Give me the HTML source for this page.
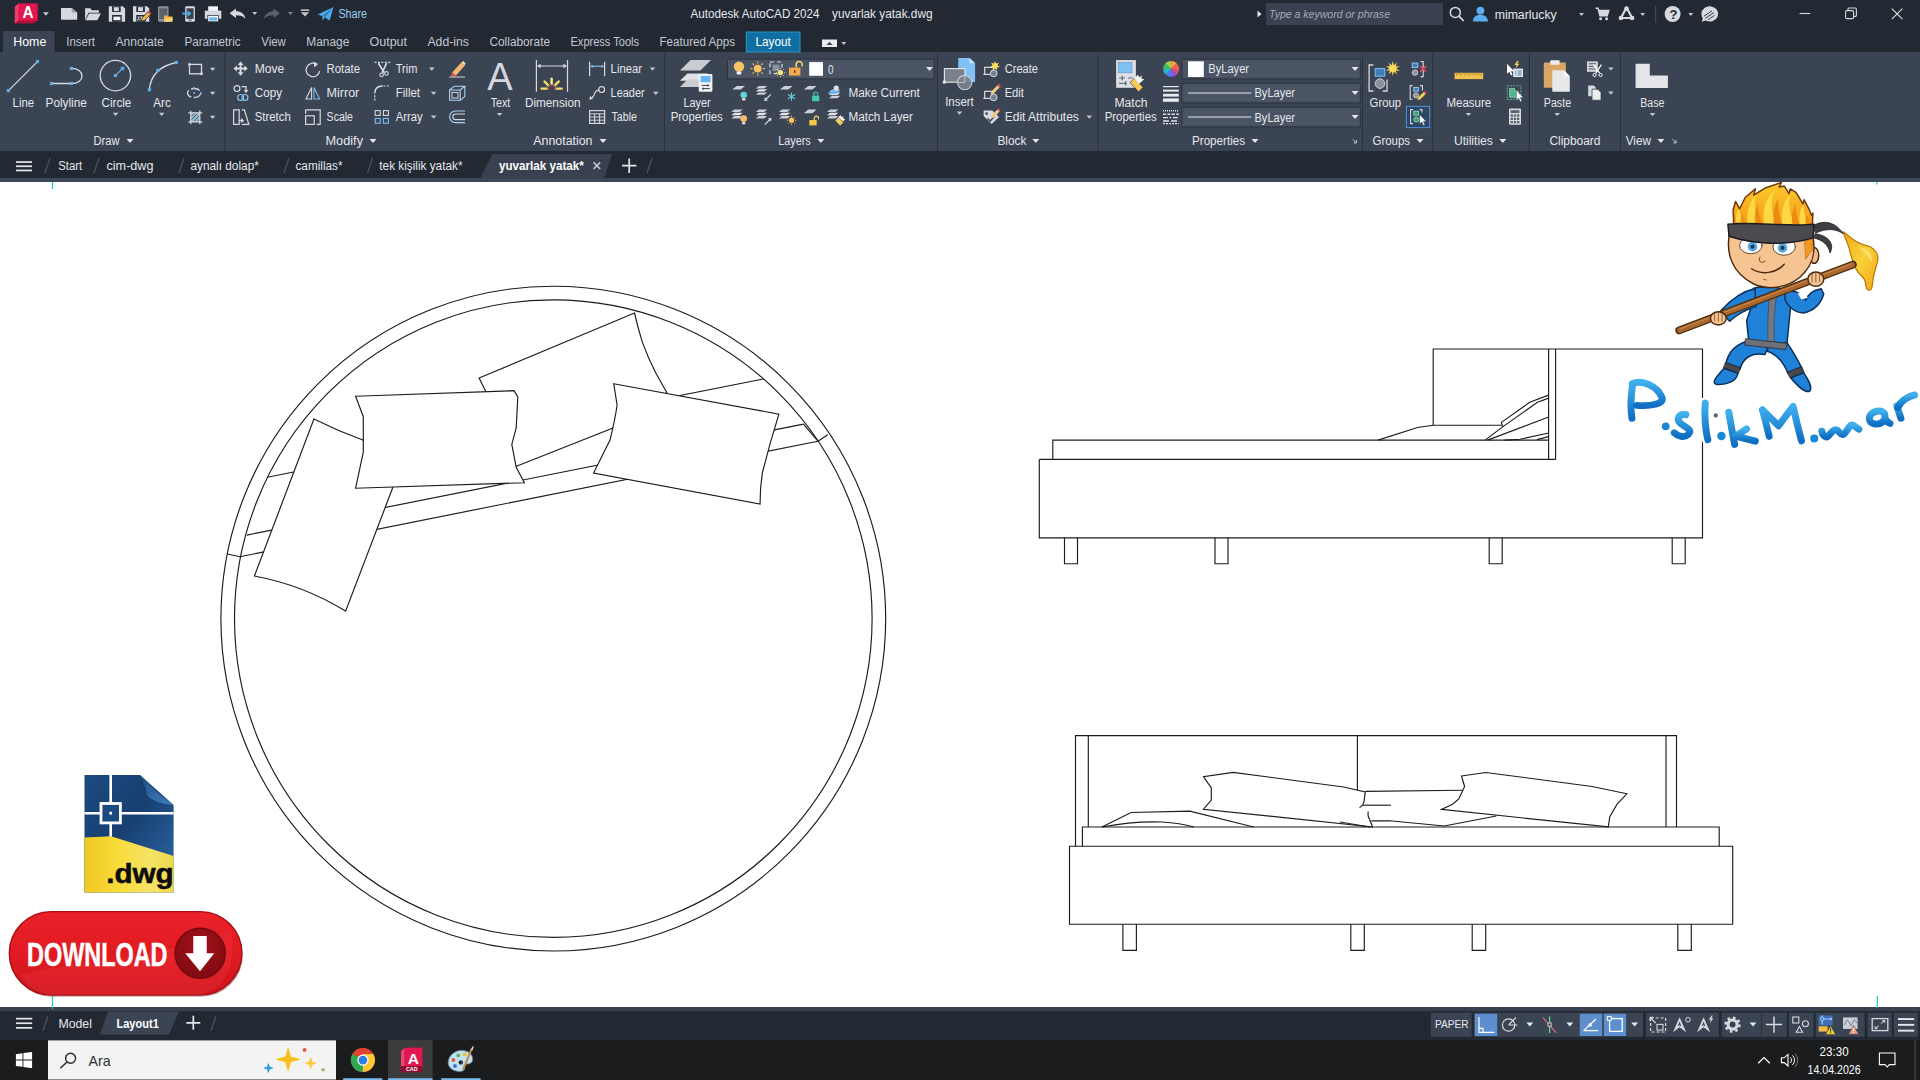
<!DOCTYPE html>
<html lang="en"><head><meta charset="utf-8"><title>Autodesk AutoCAD 2024 - yuvarlak yatak.dwg</title>
<style>
html,body{margin:0;padding:0;background:#fff;overflow:hidden;}
body{width:1920px;height:1080px;position:relative;font-family:"Liberation Sans",sans-serif;}
#titlebar{position:absolute;left:0;top:0;width:1920px;height:52px;background:#222933;}
#ribbon{position:absolute;left:0;top:52px;width:1920px;height:99.2px;background:#3b4453;}
#filetabs{position:absolute;left:0;top:151.2px;width:1920px;height:26.8px;background:#222933;}
#stripe1{position:absolute;left:0;top:178px;width:1920px;height:4px;background:#3d4655;}
#canvas{position:absolute;left:0;top:182px;width:1920px;height:825px;background:#ffffff;}
#stripe2{position:absolute;left:0;top:1007px;width:1920px;height:4px;background:#39414e;}
#statusbar{position:absolute;left:0;top:1011px;width:1920px;height:29px;background:#222933;}
#taskbar{position:absolute;left:0;top:1040px;width:1920px;height:40px;background:#1b1c1e;}
svg{position:absolute;left:0;top:0;}
text{white-space:pre;}
</style></head>
<body>
<div id="titlebar"></div>
<div id="ribbon"></div>
<div id="filetabs"></div>
<div id="stripe1"></div>
<div id="canvas"></div>
<div id="stripe2"></div>
<div id="statusbar"></div>
<div id="taskbar"></div>
<svg id="drawing" width="1920" height="1080" viewBox="0 0 1920 1080">
<line x1="52.5" y1="182" x2="52.5" y2="189" stroke="#19c8c8" stroke-width="1.2"/>
<line x1="1876.8" y1="182" x2="1876.8" y2="184.5" stroke="#19c8c8" stroke-width="1.2"/>
<line x1="52.5" y1="996" x2="52.5" y2="1009" stroke="#19c8c8" stroke-width="1.2"/>
<line x1="1877.3" y1="996" x2="1877.3" y2="1008" stroke="#19c8c8" stroke-width="1.2"/>
<circle cx="553.3" cy="618.6" r="332.4" fill="none" stroke="#1c1c1c" stroke-width="1.15"/>
<circle cx="553.3" cy="618.6" r="318.8" fill="none" stroke="#1c1c1c" stroke-width="1.15"/>
<line x1="267.3" y1="477.3" x2="763.3" y2="379.0" stroke="#1c1c1c" stroke-width="1.15"/>
<line x1="246.7" y1="535.1" x2="803.4" y2="424.1" stroke="#1c1c1c" stroke-width="1.15"/>
<line x1="240.0" y1="556.7" x2="818.0" y2="441.2" stroke="#1c1c1c" stroke-width="1.15"/>
<line x1="227.3" y1="554.0" x2="240.0" y2="556.7" stroke="#1c1c1c" stroke-width="1.15"/>
<line x1="803.4" y1="424.1" x2="818.0" y2="441.2" stroke="#1c1c1c" stroke-width="1.15"/>
<line x1="818.0" y1="441.2" x2="827.8" y2="434.8" stroke="#1c1c1c" stroke-width="1.15"/>
<path d="M479.1 378 L634.5 313 Q638 328 642 341.1 Q648 358 655.8 373 L666.9 392.8 L611.1 428.8 L514.5 467 L500 420 Z" fill="#fff" stroke="#1c1c1c" stroke-width="1.15"/>
<path d="M314 418.9 Q338 431 362.9 440 L392.7 487.8 L345.6 611.1 Q303 585 254.4 576 Z" fill="#fff" stroke="#1c1c1c" stroke-width="1.15"/>
<path d="M355.6 396.2 L514 390.7 L517.8 396.7 L516.2 427.8 L511.8 444.4 L516.2 467.3 L524.4 482.7 L355.6 488.2 L363.3 452.2 L363.3 416.7 Z" fill="#fff" stroke="#1c1c1c" stroke-width="1.15"/>
<path d="M613.7 383.7 L778.9 414.1 Q769.7 443.3 762.3 473.1 Q760 488 760.1 504 L593.6 473.1 L610 440.1 Q615 420 617.1 405 Z" fill="#fff" stroke="#1c1c1c" stroke-width="1.15"/>
<path d="M1039.3 459.4 L1039.3 537.8 L1702.5 537.8 L1702.5 349.0 L1433.2 349.0 L1433.2 425.2" fill="none" stroke="#1c1c1c" stroke-width="1.15" stroke-linejoin="miter"/>
<line x1="1039.3" y1="459.4" x2="1555.6" y2="459.4" stroke="#1c1c1c" stroke-width="1.15"/>
<line x1="1548.6" y1="349.0" x2="1548.6" y2="459.4" stroke="#1c1c1c" stroke-width="1.15"/>
<line x1="1555.6" y1="349.0" x2="1555.6" y2="459.4" stroke="#1c1c1c" stroke-width="1.15"/>
<path d="M1052.8 459.4 L1052.8 440.1 L1548.6 440.1" fill="none" stroke="#1c1c1c" stroke-width="1.15" stroke-linejoin="miter"/>
<path d="M1378.0 440.1 L1417.5 427.5 L1433.2 425.2 L1501.4 425.2" fill="none" stroke="#1c1c1c" stroke-width="1.15" stroke-linejoin="miter"/>
<path d="M1485.2 440.1 L1502.6 426.9 L1501.4 422.4 L1529.7 402.3 L1548.6 395.1" fill="none" stroke="#1c1c1c" stroke-width="1.15" stroke-linejoin="miter"/>
<path d="M1502.6 426.9 L1537.5 402.3 L1548.6 398.1" fill="none" stroke="#1c1c1c" stroke-width="1.15" stroke-linejoin="miter"/>
<line x1="1487.6" y1="440.1" x2="1548.6" y2="417.0" stroke="#1c1c1c" stroke-width="1.15"/>
<path d="M1504.4 440.1 L1520.1 439.3 L1548.6 433.0" fill="none" stroke="#1c1c1c" stroke-width="1.15" stroke-linejoin="miter"/>
<line x1="1536.9" y1="439.6" x2="1548.6" y2="436.6" stroke="#1c1c1c" stroke-width="1.15"/>
<path d="M1064.5 537.8 L1064.5 563.7 L1077.5 563.7 L1077.5 537.8" fill="none" stroke="#1c1c1c" stroke-width="1.15" stroke-linejoin="miter"/>
<path d="M1215.0 537.8 L1215.0 563.7 L1228.0 563.7 L1228.0 537.8" fill="none" stroke="#1c1c1c" stroke-width="1.15" stroke-linejoin="miter"/>
<path d="M1489.2 537.8 L1489.2 563.7 L1502.2 563.7 L1502.2 537.8" fill="none" stroke="#1c1c1c" stroke-width="1.15" stroke-linejoin="miter"/>
<path d="M1672.2 537.8 L1672.2 563.7 L1685.2 563.7 L1685.2 537.8" fill="none" stroke="#1c1c1c" stroke-width="1.15" stroke-linejoin="miter"/>
<path d="M1069.5 846.2 L1732.7 846.2 L1732.7 924.2 L1069.5 924.2 Z" fill="none" stroke="#1c1c1c" stroke-width="1.15" stroke-linejoin="miter"/>
<path d="M1082.4 846.2 L1082.4 827.0 L1719.2 827.0 L1719.2 846.2" fill="none" stroke="#1c1c1c" stroke-width="1.15" stroke-linejoin="miter"/>
<path d="M1075.5 846.2 L1075.5 735.6 L1676.5 735.6 L1676.5 827.0" fill="none" stroke="#1c1c1c" stroke-width="1.15" stroke-linejoin="miter"/>
<line x1="1088.3" y1="735.6" x2="1088.3" y2="827.0" stroke="#1c1c1c" stroke-width="1.15"/>
<line x1="1666.0" y1="735.6" x2="1666.0" y2="827.0" stroke="#1c1c1c" stroke-width="1.15"/>
<line x1="1357.4" y1="735.6" x2="1357.4" y2="790.3" stroke="#1c1c1c" stroke-width="1.15"/>
<path d="M1101.9 827.0 L1131.1 812.5 L1189.8 811.2 L1253.6 827.0" fill="none" stroke="#1c1c1c" stroke-width="1.15" stroke-linejoin="miter"/>
<path d="M1101.9 827 Q1133 821 1162 822 Q1180 823 1194 827" fill="none" stroke="#1c1c1c" stroke-width="1.15"/>
<path d="M1372.6 827.0 L1203.5 809.2 L1211.3 800.1 L1211.3 787.9 L1203.5 776.6 L1233.2 772.4 L1343.5 787.0 L1365.3 791.9 L1364.0 801.6 L1362.6 805.2 L1359.5 807.6" fill="none" stroke="#1c1c1c" stroke-width="1.15" stroke-linejoin="miter"/>
<line x1="1362.6" y1="805.2" x2="1390.9" y2="805.2" stroke="#1c1c1c" stroke-width="1.15"/>
<path d="M1368.1 811.6 L1368.1 815.8 L1372.6 827.0" fill="none" stroke="#1c1c1c" stroke-width="1.15" stroke-linejoin="miter"/>
<line x1="1340.0" y1="822.0" x2="1370.0" y2="827.0" stroke="#1c1c1c" stroke-width="1.15"/>
<line x1="1365.3" y1="791.4" x2="1462.9" y2="790.2" stroke="#1c1c1c" stroke-width="1.15"/>
<path d="M1371.3 820.8 L1389.6 820.8 L1444.2 826.0 L1496.3 816.0" fill="none" stroke="#1c1c1c" stroke-width="1.15" stroke-linejoin="miter"/>
<path d="M1461.5 776.0 L1485.8 772.5 L1592.1 786.5 L1626.9 793.8 L1617.1 804.2 L1609.8 816.7 L1608.3 826.9 L1441.5 809.4 L1452.5 804.2 L1458.8 799.0 L1464.6 786.5 Z" fill="none" stroke="#1c1c1c" stroke-width="1.15" stroke-linejoin="miter"/>
<path d="M1122.9 924.2 L1122.9 950.4 L1136.4 950.4 L1136.4 924.2" fill="none" stroke="#1c1c1c" stroke-width="1.15" stroke-linejoin="miter"/>
<path d="M1350.8 924.2 L1350.8 950.4 L1364.3 950.4 L1364.3 924.2" fill="none" stroke="#1c1c1c" stroke-width="1.15" stroke-linejoin="miter"/>
<path d="M1472.2 924.2 L1472.2 950.4 L1485.7 950.4 L1485.7 924.2" fill="none" stroke="#1c1c1c" stroke-width="1.15" stroke-linejoin="miter"/>
<path d="M1677.8 924.2 L1677.8 950.4 L1691.3 950.4 L1691.3 924.2" fill="none" stroke="#1c1c1c" stroke-width="1.15" stroke-linejoin="miter"/>
<defs>
<linearGradient id="dwgB" x1="0" y1="0" x2="1" y2="1"><stop offset="0" stop-color="#1d4a80"/><stop offset=".45" stop-color="#173f70"/><stop offset="1" stop-color="#2f6cab"/></linearGradient>
<linearGradient id="dwgY" x1="0" y1="0" x2="1" y2="0"><stop offset="0" stop-color="#f1c823"/><stop offset=".4" stop-color="#f8dc3c"/><stop offset=".75" stop-color="#f6e267"/><stop offset="1" stop-color="#f0d84a"/></linearGradient>
<linearGradient id="dwgF" x1="0" y1="0" x2="1" y2="1"><stop offset="0" stop-color="#1f4f86"/><stop offset="1" stop-color="#3f7fbe"/></linearGradient>
<linearGradient id="dlR" x1="0" y1="0" x2="0" y2="1"><stop offset="0" stop-color="#ea2129"/><stop offset=".55" stop-color="#e01a22"/><stop offset="1" stop-color="#c9151c"/></linearGradient>
<radialGradient id="dlC" cx=".5" cy=".35" r=".7"><stop offset="0" stop-color="#a5121a"/><stop offset="1" stop-color="#7c0a10"/></radialGradient>
<linearGradient id="pmT" x1="0" y1="0" x2="0" y2="1"><stop offset="0" stop-color="#3fb0ee"/><stop offset="1" stop-color="#0f6ec2"/></linearGradient>
<linearGradient id="hairG" x1="0" y1="0" x2="0" y2="1"><stop offset="0" stop-color="#fdc92e"/><stop offset="1" stop-color="#f59a14"/></linearGradient>
<linearGradient id="mopG" x1="0" y1="0" x2="1" y2="1"><stop offset="0" stop-color="#f2a916"/><stop offset=".5" stop-color="#fbd03a"/><stop offset="1" stop-color="#f0a814"/></linearGradient>
</defs>
<path d="M84.5 775H140L173.6 805V892.4H84.5z" fill="url(#dwgB)"/>
<path d="M84.5 837.5L111 836.2L173.6 856V892.4H84.5z" fill="url(#dwgY)"/>
<path d="M140 775C150 786 160 796 173.6 805C160 804 150 800 147 795C146 788 144 781 140 775z" fill="url(#dwgF)"/>
<path d="M110.7 775V836.4M84.5 813.2H173.6" stroke="#ffffff" stroke-width="2.6"/>
<rect x="101" y="803.5" width="19.4" height="19.4" fill="#1c4a80" stroke="#ffffff" stroke-width="2.8"/><rect x="109.3" y="811.8" width="2.8" height="2.8" fill="#ffffff"/>
<text x="106.2" y="882.7" font-family="Liberation Sans, sans-serif" font-weight="bold" font-size="27" fill="#0c0c0c" stroke="#0c0c0c" stroke-width=".5" textLength="67.5" lengthAdjust="spacingAndGlyphs">.dwg</text>
<rect x="10.3" y="913.4" width="232.6" height="83.4" rx="41.7" fill="#5a0d10" opacity=".35"/>
<rect x="9.3" y="911.6" width="232.6" height="83.4" rx="41.7" fill="url(#dlR)" stroke="#a80f15" stroke-width="1.4"/>
<path d="M20 975C70 960 150 962 232 930V953.300A41.700 41.700 0 0 1 200.200 995H51A41.700 41.700 0 0 1 20 975z" fill="#f0343b" opacity=".35"/>
<circle cx="200.2" cy="953.3" r="25.2" fill="url(#dlC)" stroke="#6d080d" stroke-width="1.2"/>
<path d="M193.3 935.9H206.7V953.3H214.3L200 971.3L185.2 953.3H193.3z" fill="#ffffff"/>
<text x="27" y="966.3" font-family="Liberation Sans, sans-serif" font-weight="bold" font-size="33.5" fill="#ffffff" stroke="#ffffff" stroke-width=".5" textLength="140.5" lengthAdjust="spacingAndGlyphs">DOWNLOAD</text>
<g transform="translate(1670 175) scale(0.20833)" stroke-linejoin="round" stroke-linecap="round">
<path d="M832 272C860 292 882 322 930 335C985 345 1006 382 995 422C986 452 976 472 972 522C970 562 945 562 940 530C940 500 925 490 905 470C880 440 870 392 860 352C850 320 838 300 832 272z" fill="url(#mopG)" stroke="#b87a0c" stroke-width="6"/>
<path d="M905 345C950 355 975 380 968 420C960 400 935 375 905 345z" fill="#fde27a" opacity=".8"/>
<path d="M686 246C722 218 786 214 832 282C792 256 750 256 700 278z" fill="#3f3f43" stroke="#1c1c1e" stroke-width="4"/>
<path d="M698 282C760 290 792 332 768 374C760 332 730 312 692 302z" fill="#3f3f43" stroke="#1c1c1e" stroke-width="4"/>
<path d="M380 796L470 828L456 862C400 850 352 872 336 932L268 906C280 850 310 812 380 796z" fill="#1f82d8" stroke="#0b2f58" stroke-width="7"/>
<path d="M468 830L560 802C592 850 616 890 632 926L566 952C546 900 512 862 468 846z" fill="#1f82d8" stroke="#0b2f58" stroke-width="7"/>
<path d="M268 900L338 925L328 952L258 926z" fill="#47484e" stroke="#1c1c1e" stroke-width="4"/>
<path d="M564 946L632 920L644 948L578 974z" fill="#47484e" stroke="#1c1c1e" stroke-width="4"/>
<path d="M260 928L326 952C320 986 282 1006 226 1006C198 1000 214 976 260 928z" fill="#1f82d8" stroke="#0b2f58" stroke-width="7"/>
<path d="M580 974L642 950C666 986 686 1020 670 1038C650 1046 610 1010 580 974z" fill="#1f82d8" stroke="#0b2f58" stroke-width="7"/>
<path d="M400 545C440 528 540 538 562 560L578 640L562 806L378 800L368 700L394 620z" fill="#1f82d8" stroke="#0b2f58" stroke-width="7"/>
<path d="M480 560C470 640 468 720 470 800L500 800C496 720 500 640 515 565z" fill="#767880" stroke="#3a3b40" stroke-width="3"/>
<path d="M364 786L562 808L556 838L360 816z" fill="#6e7078" stroke="#2c2d31" stroke-width="4"/>
<path d="M552 560C600 548 640 570 652 602C662 572 690 552 726 546L738 572C722 622 690 652 640 662C600 662 568 632 552 600z" fill="#1f82d8" stroke="#0b2f58" stroke-width="7"/>
<path d="M612 566L650 552L660 590L630 596z" fill="#ffffff"/>
<path d="M408 545C340 560 280 612 244 652L286 702C330 662 380 642 412 632z" fill="#1f82d8" stroke="#0b2f58" stroke-width="7"/>
<path d="M44 746L878 430" stroke="#4a2a0c" stroke-width="37"/><path d="M46 745L876 431" stroke="#a9672f" stroke-width="25"/><path d="M50 738L872 426" stroke="#c98a4a" stroke-width="5"/>
<ellipse cx="232" cy="688" rx="38" ry="32" fill="#f6c392" stroke="#4a2a0c" stroke-width="7"/><path d="M214 662V700M232 660V702M250 664V700" stroke="#4a2a0c" stroke-width="3"/>
<ellipse cx="700" cy="500" rx="38" ry="34" fill="#f6c392" stroke="#4a2a0c" stroke-width="7"/><path d="M682 474V512M700 470V514M718 474V510" stroke="#4a2a0c" stroke-width="3"/>
<ellipse cx="692" cy="386" rx="22" ry="38" fill="#f3b884" stroke="#4a2a0c" stroke-width="7"/>
<path d="M285 286C268 380 300 470 400 522C470 556 560 542 622 492C682 440 702 380 686 296C560 340 400 330 285 286z" fill="#f6c392" stroke="#4a2a0c" stroke-width="7"/>
<path d="M648 320L684 304L682 362L652 402z" fill="#f49a1c" stroke="#a85a0c" stroke-width="3"/>
<ellipse cx="388" cy="338" rx="54" ry="40" fill="#ffffff" stroke="#4a2a0c" stroke-width="4"/><ellipse cx="548" cy="345" rx="54" ry="40" fill="#ffffff" stroke="#4a2a0c" stroke-width="4"/>
<circle cx="396" cy="344" r="23" fill="#5ba8de"/><circle cx="396" cy="344" r="10" fill="#173a5c"/><circle cx="540" cy="350" r="23" fill="#5ba8de"/><circle cx="540" cy="350" r="10" fill="#173a5c"/>
<path d="M432 394C420 416 440 426 456 414" fill="none" stroke="#4a2a0c" stroke-width="4"/><path d="M392 450C440 482 510 472 548 428" fill="none" stroke="#4a2a0c" stroke-width="7"/><path d="M448 500l14 4" stroke="#4a2a0c" stroke-width="3"/>
<path d="M306 240L303 167L315 127L334 162L361 108L410 66L402 97L460 61L535 36L524 58L549 53L571 89L577 67L605 83L638 139L644 119L666 161L680 194L686 183L683 246C560 262 420 250 306 240z" fill="url(#hairG)" stroke="#6a3808" stroke-width="7"/>
<path d="M318 225C316 190 322 160 334 170C340 200 350 220 362 236zM372 232C366 180 380 140 410 95C400 150 410 200 430 240zM452 240C440 180 455 120 500 72C480 130 490 190 512 244zM540 246C530 190 540 130 575 95C566 150 580 200 600 246zM622 244C616 200 624 165 642 140C640 180 650 215 668 240z" fill="#ffe04a" opacity=".85"/>
<path d="M340 238C336 215 340 196 348 186C350 205 356 222 366 238zM410 242C402 205 408 170 424 140C422 180 430 212 446 244zM500 246C490 200 498 150 520 110C516 160 524 205 540 246zM588 246C580 205 588 170 604 140C602 180 610 214 626 246zM652 242C648 222 652 204 660 192C662 212 668 228 678 240z" fill="#e8820f" opacity=".8"/>
<path d="M278 236C400 222 560 250 692 236L686 302C560 342 400 332 283 294z" fill="#4b4b4f" stroke="#1c1c1e" stroke-width="7"/>
</g>
<g transform="translate(1610 365) scale(0.16146)" fill="none" stroke-linecap="round" stroke-linejoin="round">
<path d="M140 122C128 200 128 280 136 330" stroke="#ffffff" stroke-width="74"/>
<path d="M138 116C200 88 292 130 322 200C340 242 250 256 166 250" stroke="#ffffff" stroke-width="74"/>
<path d="M470 308C430 298 404 334 440 364C482 396 512 402 482 432C460 452 420 442 398 420" stroke="#ffffff" stroke-width="74"/>
<path d="M590 236C584 300 590 400 606 462" stroke="#ffffff" stroke-width="74"/>
<path d="M736 292C746 352 760 430 772 492" stroke="#ffffff" stroke-width="74"/>
<path d="M846 396L778 440L900 472" stroke="#ffffff" stroke-width="74"/>
<path d="M944 278C960 332 976 400 986 442" stroke="#ffffff" stroke-width="74"/>
<path d="M946 280L1044 376L1134 256C1150 330 1170 410 1186 470" stroke="#ffffff" stroke-width="74"/>
<path d="M1312 410C1318 440 1340 456 1356 436C1372 416 1388 396 1404 402C1420 410 1428 436 1444 430C1462 424 1476 380 1494 372C1512 366 1526 392 1542 398" stroke="#ffffff" stroke-width="74"/>
<path d="M1700 300C1670 270 1610 290 1606 330C1604 372 1670 380 1700 340C1706 320 1704 310 1700 300C1700 330 1712 352 1734 362" stroke="#ffffff" stroke-width="74"/>
<path d="M1776 252L1802 330" stroke="#ffffff" stroke-width="74"/>
<path d="M1782 264C1800 222 1850 192 1886 186" stroke="#ffffff" stroke-width="74"/>
<circle cx="345" cy="380" r="40" fill="#ffffff"/>
<circle cx="690" cy="440" r="42" fill="#ffffff"/>
<circle cx="1265" cy="455" r="41" fill="#ffffff"/>
<path d="M140 122C128 200 128 280 136 330" stroke="url(#pmT)" stroke-width="43"/>
<path d="M138 116C200 88 292 130 322 200C340 242 250 256 166 250" stroke="url(#pmT)" stroke-width="43"/>
<path d="M470 308C430 298 404 334 440 364C482 396 512 402 482 432C460 452 420 442 398 420" stroke="url(#pmT)" stroke-width="43"/>
<path d="M590 236C584 300 590 400 606 462" stroke="url(#pmT)" stroke-width="43"/>
<path d="M736 292C746 352 760 430 772 492" stroke="url(#pmT)" stroke-width="43"/>
<path d="M846 396L778 440L900 472" stroke="url(#pmT)" stroke-width="43"/>
<path d="M944 278C960 332 976 400 986 442" stroke="url(#pmT)" stroke-width="43"/>
<path d="M946 280L1044 376L1134 256C1150 330 1170 410 1186 470" stroke="url(#pmT)" stroke-width="43"/>
<path d="M1312 410C1318 440 1340 456 1356 436C1372 416 1388 396 1404 402C1420 410 1428 436 1444 430C1462 424 1476 380 1494 372C1512 366 1526 392 1542 398" stroke="url(#pmT)" stroke-width="43"/>
<path d="M1700 300C1670 270 1610 290 1606 330C1604 372 1670 380 1700 340C1706 320 1704 310 1700 300C1700 330 1712 352 1734 362" stroke="url(#pmT)" stroke-width="43"/>
<path d="M1776 252L1802 330" stroke="url(#pmT)" stroke-width="43"/>
<path d="M1782 264C1800 222 1850 192 1886 186" stroke="url(#pmT)" stroke-width="43"/>
<circle cx="345" cy="380" r="24" fill="#1a86d6"/>
<circle cx="690" cy="440" r="26" fill="#1a86d6"/>
<circle cx="1265" cy="455" r="25" fill="#1a86d6"/>
<circle cx="655" cy="312" r="13" fill="#5f6368"/>
</g>
</svg>
<svg id="ui" width="1920" height="1080" viewBox="0 0 1920 1080">
<rect x="3.0" y="31.0" width="51.5" height="21.0" fill="#3b4453" />
<rect x="746.3" y="32.0" width="53.7" height="20.0" fill="#0f6fa3" stroke="#2f95cc" stroke-width="1"/>
<rect x="224.5" y="54.0" width="1.4" height="97.0" fill="#2a313c" />
<rect x="225.9" y="54.0" width="0.8" height="97.0" fill="#444d5d" />
<rect x="664.0" y="54.0" width="1.4" height="97.0" fill="#2a313c" />
<rect x="665.4" y="54.0" width="0.8" height="97.0" fill="#444d5d" />
<rect x="937.0" y="54.0" width="1.4" height="97.0" fill="#2a313c" />
<rect x="938.4" y="54.0" width="0.8" height="97.0" fill="#444d5d" />
<rect x="1097.8" y="54.0" width="1.4" height="97.0" fill="#2a313c" />
<rect x="1099.2" y="54.0" width="0.8" height="97.0" fill="#444d5d" />
<rect x="1362.1" y="54.0" width="1.4" height="97.0" fill="#2a313c" />
<rect x="1363.5" y="54.0" width="0.8" height="97.0" fill="#444d5d" />
<rect x="1432.2" y="54.0" width="1.4" height="97.0" fill="#2a313c" />
<rect x="1433.6" y="54.0" width="0.8" height="97.0" fill="#444d5d" />
<rect x="1528.8" y="54.0" width="1.4" height="97.0" fill="#2a313c" />
<rect x="1530.2" y="54.0" width="0.8" height="97.0" fill="#444d5d" />
<rect x="1620.0" y="54.0" width="1.4" height="97.0" fill="#2a313c" />
<rect x="1621.4" y="54.0" width="0.8" height="97.0" fill="#444d5d" />
<rect x="1266.0" y="3.0" width="177.0" height="22.0" fill="#3a4251" />
<text x="338.4" y="18.0" font-family="Liberation Sans, sans-serif" font-size="12.5" fill="#9ccdf1" font-weight="normal" font-style="normal" textLength="28.7" lengthAdjust="spacingAndGlyphs">Share</text>
<text x="690.5" y="18.3" font-family="Liberation Sans, sans-serif" font-size="12" fill="#e4e7ec" font-weight="normal" font-style="normal" textLength="129.0" lengthAdjust="spacingAndGlyphs">Autodesk AutoCAD 2024</text>
<text x="832.0" y="18.3" font-family="Liberation Sans, sans-serif" font-size="12" fill="#e4e7ec" font-weight="normal" font-style="normal" textLength="100.5" lengthAdjust="spacingAndGlyphs">yuvarlak yatak.dwg</text>
<text x="1269.0" y="18.0" font-family="Liberation Sans, sans-serif" font-size="11" fill="#a4aab4" font-weight="normal" font-style="italic" textLength="121.0" lengthAdjust="spacingAndGlyphs">Type a keyword or phrase</text>
<text x="1494.7" y="19.0" font-family="Liberation Sans, sans-serif" font-size="12.5" fill="#e4e7ec" font-weight="normal" font-style="normal" textLength="62.0" lengthAdjust="spacingAndGlyphs">mimarlucky</text>
<text x="13.3" y="46.2" font-family="Liberation Sans, sans-serif" font-size="12" fill="#ffffff" font-weight="normal" font-style="normal" textLength="33.0" lengthAdjust="spacingAndGlyphs">Home</text>
<text x="66.3" y="46.2" font-family="Liberation Sans, sans-serif" font-size="12" fill="#c3c8d0" font-weight="normal" font-style="normal" textLength="28.7" lengthAdjust="spacingAndGlyphs">Insert</text>
<text x="115.5" y="46.2" font-family="Liberation Sans, sans-serif" font-size="12" fill="#c3c8d0" font-weight="normal" font-style="normal" textLength="48.3" lengthAdjust="spacingAndGlyphs">Annotate</text>
<text x="184.5" y="46.2" font-family="Liberation Sans, sans-serif" font-size="12" fill="#c3c8d0" font-weight="normal" font-style="normal" textLength="56.0" lengthAdjust="spacingAndGlyphs">Parametric</text>
<text x="261.3" y="46.2" font-family="Liberation Sans, sans-serif" font-size="12" fill="#c3c8d0" font-weight="normal" font-style="normal" textLength="24.5" lengthAdjust="spacingAndGlyphs">View</text>
<text x="306.3" y="46.2" font-family="Liberation Sans, sans-serif" font-size="12" fill="#c3c8d0" font-weight="normal" font-style="normal" textLength="43.0" lengthAdjust="spacingAndGlyphs">Manage</text>
<text x="369.5" y="46.2" font-family="Liberation Sans, sans-serif" font-size="12" fill="#c3c8d0" font-weight="normal" font-style="normal" textLength="37.5" lengthAdjust="spacingAndGlyphs">Output</text>
<text x="427.5" y="46.2" font-family="Liberation Sans, sans-serif" font-size="12" fill="#c3c8d0" font-weight="normal" font-style="normal" textLength="41.3" lengthAdjust="spacingAndGlyphs">Add-ins</text>
<text x="489.5" y="46.2" font-family="Liberation Sans, sans-serif" font-size="12" fill="#c3c8d0" font-weight="normal" font-style="normal" textLength="60.5" lengthAdjust="spacingAndGlyphs">Collaborate</text>
<text x="570.5" y="46.2" font-family="Liberation Sans, sans-serif" font-size="12" fill="#c3c8d0" font-weight="normal" font-style="normal" textLength="68.5" lengthAdjust="spacingAndGlyphs">Express Tools</text>
<text x="659.5" y="46.2" font-family="Liberation Sans, sans-serif" font-size="12" fill="#c3c8d0" font-weight="normal" font-style="normal" textLength="75.5" lengthAdjust="spacingAndGlyphs">Featured Apps</text>
<text x="755.5" y="46.2" font-family="Liberation Sans, sans-serif" font-size="12" fill="#ffffff" font-weight="normal" font-style="normal" textLength="35.3" lengthAdjust="spacingAndGlyphs">Layout</text>
<rect x="822.0" y="39.5" width="15.0" height="7.5" fill="#e9ebee" />
<path d="M826.5 45l3-3.2 3 3.2z" fill="#39414e"/>
<path d="M841.3 42.0h5l-2.5 3z" fill="#c3c8d0"/>
<text x="12.6" y="106.6" font-family="Liberation Sans, sans-serif" font-size="12" fill="#e4e7ec" font-weight="normal" font-style="normal" textLength="21.5" lengthAdjust="spacingAndGlyphs">Line</text>
<text x="45.5" y="106.6" font-family="Liberation Sans, sans-serif" font-size="12" fill="#e4e7ec" font-weight="normal" font-style="normal" textLength="41.4" lengthAdjust="spacingAndGlyphs">Polyline</text>
<text x="101.6" y="106.6" font-family="Liberation Sans, sans-serif" font-size="12" fill="#e4e7ec" font-weight="normal" font-style="normal" textLength="29.6" lengthAdjust="spacingAndGlyphs">Circle</text>
<text x="153.3" y="106.6" font-family="Liberation Sans, sans-serif" font-size="12" fill="#e4e7ec" font-weight="normal" font-style="normal" textLength="17.4" lengthAdjust="spacingAndGlyphs">Arc</text>
<text x="254.7" y="72.9" font-family="Liberation Sans, sans-serif" font-size="12" fill="#e4e7ec" font-weight="normal" font-style="normal" textLength="29.5" lengthAdjust="spacingAndGlyphs">Move</text>
<text x="254.7" y="96.9" font-family="Liberation Sans, sans-serif" font-size="12" fill="#e4e7ec" font-weight="normal" font-style="normal" textLength="27.3" lengthAdjust="spacingAndGlyphs">Copy</text>
<text x="254.7" y="120.9" font-family="Liberation Sans, sans-serif" font-size="12" fill="#e4e7ec" font-weight="normal" font-style="normal" textLength="36.1" lengthAdjust="spacingAndGlyphs">Stretch</text>
<text x="326.6" y="72.9" font-family="Liberation Sans, sans-serif" font-size="12" fill="#e4e7ec" font-weight="normal" font-style="normal" textLength="33.4" lengthAdjust="spacingAndGlyphs">Rotate</text>
<text x="326.6" y="96.9" font-family="Liberation Sans, sans-serif" font-size="12" fill="#e4e7ec" font-weight="normal" font-style="normal" textLength="32.7" lengthAdjust="spacingAndGlyphs">Mirror</text>
<text x="326.6" y="120.9" font-family="Liberation Sans, sans-serif" font-size="12" fill="#e4e7ec" font-weight="normal" font-style="normal" textLength="26.4" lengthAdjust="spacingAndGlyphs">Scale</text>
<text x="395.8" y="72.9" font-family="Liberation Sans, sans-serif" font-size="12" fill="#e4e7ec" font-weight="normal" font-style="normal" textLength="21.6" lengthAdjust="spacingAndGlyphs">Trim</text>
<text x="395.8" y="96.9" font-family="Liberation Sans, sans-serif" font-size="12" fill="#e4e7ec" font-weight="normal" font-style="normal" textLength="24.2" lengthAdjust="spacingAndGlyphs">Fillet</text>
<text x="395.8" y="120.9" font-family="Liberation Sans, sans-serif" font-size="12" fill="#e4e7ec" font-weight="normal" font-style="normal" textLength="26.7" lengthAdjust="spacingAndGlyphs">Array</text>
<text x="490.7" y="106.6" font-family="Liberation Sans, sans-serif" font-size="12" fill="#e4e7ec" font-weight="normal" font-style="normal" textLength="19.5" lengthAdjust="spacingAndGlyphs">Text</text>
<text x="524.9" y="106.6" font-family="Liberation Sans, sans-serif" font-size="12" fill="#e4e7ec" font-weight="normal" font-style="normal" textLength="55.6" lengthAdjust="spacingAndGlyphs">Dimension</text>
<text x="610.6" y="72.9" font-family="Liberation Sans, sans-serif" font-size="12" fill="#e4e7ec" font-weight="normal" font-style="normal" textLength="31.5" lengthAdjust="spacingAndGlyphs">Linear</text>
<text x="610.6" y="96.9" font-family="Liberation Sans, sans-serif" font-size="12" fill="#e4e7ec" font-weight="normal" font-style="normal" textLength="34.1" lengthAdjust="spacingAndGlyphs">Leader</text>
<text x="611.5" y="120.9" font-family="Liberation Sans, sans-serif" font-size="12" fill="#e4e7ec" font-weight="normal" font-style="normal" textLength="25.4" lengthAdjust="spacingAndGlyphs">Table</text>
<text x="683.4" y="106.6" font-family="Liberation Sans, sans-serif" font-size="12" fill="#e4e7ec" font-weight="normal" font-style="normal" textLength="27.3" lengthAdjust="spacingAndGlyphs">Layer</text>
<text x="670.7" y="121.2" font-family="Liberation Sans, sans-serif" font-size="12" fill="#e4e7ec" font-weight="normal" font-style="normal" textLength="52.1" lengthAdjust="spacingAndGlyphs">Properties</text>
<text x="848.5" y="97.2" font-family="Liberation Sans, sans-serif" font-size="12" fill="#e4e7ec" font-weight="normal" font-style="normal" textLength="71.3" lengthAdjust="spacingAndGlyphs">Make Current</text>
<text x="848.5" y="120.9" font-family="Liberation Sans, sans-serif" font-size="12" fill="#e4e7ec" font-weight="normal" font-style="normal" textLength="64.4" lengthAdjust="spacingAndGlyphs">Match Layer</text>
<text x="945.2" y="105.8" font-family="Liberation Sans, sans-serif" font-size="12" fill="#e4e7ec" font-weight="normal" font-style="normal" textLength="28.6" lengthAdjust="spacingAndGlyphs">Insert</text>
<text x="1004.7" y="72.9" font-family="Liberation Sans, sans-serif" font-size="12" fill="#e4e7ec" font-weight="normal" font-style="normal" textLength="33.3" lengthAdjust="spacingAndGlyphs">Create</text>
<text x="1004.7" y="96.9" font-family="Liberation Sans, sans-serif" font-size="12" fill="#e4e7ec" font-weight="normal" font-style="normal" textLength="19.2" lengthAdjust="spacingAndGlyphs">Edit</text>
<text x="1004.7" y="120.9" font-family="Liberation Sans, sans-serif" font-size="12" fill="#e4e7ec" font-weight="normal" font-style="normal" textLength="74.2" lengthAdjust="spacingAndGlyphs">Edit Attributes</text>
<text x="1114.4" y="106.6" font-family="Liberation Sans, sans-serif" font-size="12" fill="#e4e7ec" font-weight="normal" font-style="normal" textLength="33.2" lengthAdjust="spacingAndGlyphs">Match</text>
<text x="1104.7" y="121.2" font-family="Liberation Sans, sans-serif" font-size="12" fill="#e4e7ec" font-weight="normal" font-style="normal" textLength="52.0" lengthAdjust="spacingAndGlyphs">Properties</text>
<text x="1369.6" y="106.6" font-family="Liberation Sans, sans-serif" font-size="12" fill="#e4e7ec" font-weight="normal" font-style="normal" textLength="31.6" lengthAdjust="spacingAndGlyphs">Group</text>
<text x="1446.5" y="106.6" font-family="Liberation Sans, sans-serif" font-size="12" fill="#e4e7ec" font-weight="normal" font-style="normal" textLength="44.6" lengthAdjust="spacingAndGlyphs">Measure</text>
<text x="1543.8" y="106.6" font-family="Liberation Sans, sans-serif" font-size="12" fill="#e4e7ec" font-weight="normal" font-style="normal" textLength="27.3" lengthAdjust="spacingAndGlyphs">Paste</text>
<text x="1640.3" y="106.6" font-family="Liberation Sans, sans-serif" font-size="12" fill="#e4e7ec" font-weight="normal" font-style="normal" textLength="24.0" lengthAdjust="spacingAndGlyphs">Base</text>
<text x="93.5" y="144.8" font-family="Liberation Sans, sans-serif" font-size="12" fill="#e4e7ec" font-weight="normal" font-style="normal" textLength="26.0" lengthAdjust="spacingAndGlyphs">Draw</text>
<path d="M126.5 139.0h7l-3.5 4z" fill="#e4e7ec"/>
<text x="325.5" y="144.8" font-family="Liberation Sans, sans-serif" font-size="12" fill="#e4e7ec" font-weight="normal" font-style="normal" textLength="37.5" lengthAdjust="spacingAndGlyphs">Modify</text>
<path d="M369.5 139.0h7l-3.5 4z" fill="#e4e7ec"/>
<text x="533.3" y="144.8" font-family="Liberation Sans, sans-serif" font-size="12" fill="#e4e7ec" font-weight="normal" font-style="normal" textLength="59.2" lengthAdjust="spacingAndGlyphs">Annotation</text>
<path d="M599.5 139.0h7l-3.5 4z" fill="#e4e7ec"/>
<text x="778.3" y="144.8" font-family="Liberation Sans, sans-serif" font-size="12" fill="#e4e7ec" font-weight="normal" font-style="normal" textLength="32.5" lengthAdjust="spacingAndGlyphs">Layers</text>
<path d="M817.3 139.0h7l-3.5 4z" fill="#e4e7ec"/>
<text x="997.5" y="144.8" font-family="Liberation Sans, sans-serif" font-size="12" fill="#e4e7ec" font-weight="normal" font-style="normal" textLength="28.8" lengthAdjust="spacingAndGlyphs">Block</text>
<path d="M1032.3 139.0h7l-3.5 4z" fill="#e4e7ec"/>
<text x="1192.0" y="144.8" font-family="Liberation Sans, sans-serif" font-size="12" fill="#e4e7ec" font-weight="normal" font-style="normal" textLength="53.0" lengthAdjust="spacingAndGlyphs">Properties</text>
<path d="M1251.5 139.0h7l-3.5 4z" fill="#e4e7ec"/>
<text x="1372.5" y="144.8" font-family="Liberation Sans, sans-serif" font-size="12" fill="#e4e7ec" font-weight="normal" font-style="normal" textLength="37.5" lengthAdjust="spacingAndGlyphs">Groups</text>
<path d="M1416.5 139.0h7l-3.5 4z" fill="#e4e7ec"/>
<text x="1453.9" y="144.8" font-family="Liberation Sans, sans-serif" font-size="12" fill="#e4e7ec" font-weight="normal" font-style="normal" textLength="39.0" lengthAdjust="spacingAndGlyphs">Utilities</text>
<path d="M1499.3 139.0h7l-3.5 4z" fill="#e4e7ec"/>
<text x="1549.4" y="144.8" font-family="Liberation Sans, sans-serif" font-size="12" fill="#e4e7ec" font-weight="normal" font-style="normal" textLength="51.1" lengthAdjust="spacingAndGlyphs">Clipboard</text>
<text x="1625.7" y="144.8" font-family="Liberation Sans, sans-serif" font-size="12" fill="#e4e7ec" font-weight="normal" font-style="normal" textLength="25.3" lengthAdjust="spacingAndGlyphs">View</text>
<path d="M1657.4 139.0h7l-3.5 4z" fill="#e4e7ec"/>
<path d="M1352.8 139.3l3.6 3.6m0-2.8v2.8h-2.8" stroke="#c3c8d0" stroke-width="1" fill="none"/>
<path d="M1672.5 139.3l3.6 3.6m0-2.8v2.8h-2.8" stroke="#c3c8d0" stroke-width="1" fill="none"/>
<path d="M209.8 67.8h5.6l-2.8 3.2z" fill="#c3c8d0"/>
<path d="M209.8 91.7h5.6l-2.8 3.2z" fill="#c3c8d0"/>
<path d="M209.8 115.7h5.6l-2.8 3.2z" fill="#c3c8d0"/>
<path d="M112.8 112.7h5.6l-2.8 3.2z" fill="#c3c8d0"/>
<path d="M158.9 112.7h5.6l-2.8 3.2z" fill="#c3c8d0"/>
<path d="M429.0 67.6h5.6l-2.8 3.2z" fill="#c3c8d0"/>
<path d="M430.8 91.8h5.6l-2.8 3.2z" fill="#c3c8d0"/>
<path d="M430.8 115.5h5.6l-2.8 3.2z" fill="#c3c8d0"/>
<path d="M496.7 112.9h5.6l-2.8 3.2z" fill="#c3c8d0"/>
<path d="M649.7 67.6h5.6l-2.8 3.2z" fill="#c3c8d0"/>
<path d="M653.0 91.8h5.6l-2.8 3.2z" fill="#c3c8d0"/>
<path d="M956.7 111.6h5.6l-2.8 3.2z" fill="#c3c8d0"/>
<path d="M1086.5 115.5h5.6l-2.8 3.2z" fill="#c3c8d0"/>
<path d="M1465.7 112.9h5.6l-2.8 3.2z" fill="#c3c8d0"/>
<path d="M1554.4 112.9h5.6l-2.8 3.2z" fill="#c3c8d0"/>
<path d="M1649.7 113.0h5.6l-2.8 3.2z" fill="#c3c8d0"/>
<path d="M1608.1 67.4h5.6l-2.8 3.2z" fill="#c3c8d0"/>
<path d="M1608.1 91.6h5.6l-2.8 3.2z" fill="#c3c8d0"/>
<rect x="727.5" y="59.1" width="206.6" height="19.8" fill="#4a5465" stroke="#2c333f" stroke-width="1"/>
<rect x="809.2" y="62.1" width="13.8" height="13.7" fill="#ffffff" />
<text x="828.1" y="73.8" font-family="Liberation Sans, sans-serif" font-size="12" fill="#e4e7ec" font-weight="normal" font-style="normal" textLength="5.5" lengthAdjust="spacingAndGlyphs">0</text>
<path d="M926.0 67.0h7l-3.5 4z" fill="#e4e7ec"/>
<rect x="1182.0" y="59.1" width="178.3" height="19.8" fill="#4a5465" stroke="#2c333f" stroke-width="1"/>
<path d="M1351.5 67.1h7l-3.5 4z" fill="#e4e7ec"/>
<rect x="1182.0" y="83.1" width="178.3" height="19.8" fill="#4a5465" stroke="#2c333f" stroke-width="1"/>
<path d="M1351.5 91.1h7l-3.5 4z" fill="#e4e7ec"/>
<rect x="1182.0" y="107.1" width="178.3" height="19.8" fill="#4a5465" stroke="#2c333f" stroke-width="1"/>
<path d="M1351.5 115.1h7l-3.5 4z" fill="#e4e7ec"/>
<rect x="1188.0" y="61.3" width="15.8" height="15.7" fill="#ffffff" />
<text x="1208.3" y="73.3" font-family="Liberation Sans, sans-serif" font-size="12" fill="#e4e7ec" font-weight="normal" font-style="normal" textLength="40.7" lengthAdjust="spacingAndGlyphs">ByLayer</text>
<rect x="1188.0" y="92.5" width="63.3" height="1.0" fill="#e6e9ed" />
<text x="1254.5" y="97.3" font-family="Liberation Sans, sans-serif" font-size="12" fill="#e4e7ec" font-weight="normal" font-style="normal" textLength="40.5" lengthAdjust="spacingAndGlyphs">ByLayer</text>
<rect x="1188.0" y="116.5" width="63.3" height="1.0" fill="#e6e9ed" />
<text x="1254.5" y="121.5" font-family="Liberation Sans, sans-serif" font-size="12" fill="#e4e7ec" font-weight="normal" font-style="normal" textLength="40.5" lengthAdjust="spacingAndGlyphs">ByLayer</text>
<path d="M480.4 178L492.4 154H612.2L604.4 178z" fill="#394150"/>
<text x="58.3" y="169.8" font-family="Liberation Sans, sans-serif" font-size="12" fill="#e4e7ec" font-weight="normal" font-style="normal" textLength="23.7" lengthAdjust="spacingAndGlyphs">Start</text>
<text x="106.5" y="169.8" font-family="Liberation Sans, sans-serif" font-size="12" fill="#e4e7ec" font-weight="normal" font-style="normal" textLength="47.0" lengthAdjust="spacingAndGlyphs">cim-dwg</text>
<text x="190.5" y="169.8" font-family="Liberation Sans, sans-serif" font-size="12" fill="#e4e7ec" font-weight="normal" font-style="normal" textLength="68.3" lengthAdjust="spacingAndGlyphs">aynalı dolap*</text>
<text x="295.5" y="169.8" font-family="Liberation Sans, sans-serif" font-size="12" fill="#e4e7ec" font-weight="normal" font-style="normal" textLength="47.0" lengthAdjust="spacingAndGlyphs">camillas*</text>
<text x="379.3" y="169.8" font-family="Liberation Sans, sans-serif" font-size="12" fill="#e4e7ec" font-weight="normal" font-style="normal" textLength="83.2" lengthAdjust="spacingAndGlyphs">tek kişilik yatak*</text>
<text x="499.0" y="169.8" font-family="Liberation Sans, sans-serif" font-size="12" fill="#ffffff" font-weight="bold" font-style="normal" textLength="84.8" lengthAdjust="spacingAndGlyphs">yuvarlak yatak*</text>
<path d="M45 173l5-15" stroke="#4a5260" stroke-width="1.3"/>
<path d="M94 173l5-15" stroke="#4a5260" stroke-width="1.3"/>
<path d="M179 173l5-15" stroke="#4a5260" stroke-width="1.3"/>
<path d="M284 173l5-15" stroke="#4a5260" stroke-width="1.3"/>
<path d="M367.5 173l5-15" stroke="#4a5260" stroke-width="1.3"/>
<path d="M647 173l5-15" stroke="#4a5260" stroke-width="1.3"/>
<rect x="16.0" y="161.2" width="16.0" height="1.7" fill="#e4e7ec" />
<rect x="16.0" y="165.4" width="16.0" height="1.7" fill="#e4e7ec" />
<rect x="16.0" y="169.6" width="16.0" height="1.7" fill="#e4e7ec" />
<path d="M593.6 162.4l6.6 6.6m0-6.6l-6.6 6.6" stroke="#c3c8d0" stroke-width="1.5"/>
<path d="M622 165.7h14.4M629.2 158.5v14.4" stroke="#e4e7ec" stroke-width="1.7"/>
<path d="M100 1034.5L108 1011.5H179L169 1034.5z" fill="#3b4453"/>
<rect x="16.0" y="1017.8" width="16.2" height="1.7" fill="#e4e7ec" />
<rect x="16.0" y="1022.4" width="16.2" height="1.7" fill="#e4e7ec" />
<rect x="16.0" y="1027.0" width="16.2" height="1.7" fill="#e4e7ec" />
<text x="58.5" y="1027.8" font-family="Liberation Sans, sans-serif" font-size="12" fill="#e4e7ec" font-weight="normal" font-style="normal" textLength="33.4" lengthAdjust="spacingAndGlyphs">Model</text>
<text x="116.5" y="1027.8" font-family="Liberation Sans, sans-serif" font-size="12" fill="#ffffff" font-weight="bold" font-style="normal" textLength="42.3" lengthAdjust="spacingAndGlyphs">Layout1</text>
<path d="M186.3 1022.8h14M193.3 1015.8v14" stroke="#e4e7ec" stroke-width="1.7"/>
<path d="M43 1031l5-15" stroke="#4a5260" stroke-width="1.3"/>
<path d="M211 1031l5-15" stroke="#4a5260" stroke-width="1.3"/>
<path d="M14.8 6.6L19.5 3.6H37.6V20.4L33 23.4H14.8z" fill="#b10f3d"/>
<path d="M18.6 3.6H37.6V20.6H18.6z" fill="#e3174f"/>
<path d="M14.8 6.6L18.6 3.6V20.6L14.8 23.4z" fill="#f03c69"/>
<text x="22.6" y="18.4" font-family="Liberation Sans, sans-serif" font-size="16.5" fill="#ffffff" font-weight="bold" font-style="normal" textLength="11.0" lengthAdjust="spacingAndGlyphs">A</text>
<path d="M42.9 12.2h6l-3.0 3.5z" fill="#c3c8d0"/>
<path d="M61 7.9h10.7l5.5 4.6v7.3H61z" fill="#d6d9de"/><path d="M71.7 7.9v4.6h5.5z" fill="#9aa0aa"/>
<path d="M85.1 8.3h5.2l1.6 2h7v2.4h-10.4l-3.4 7.5z" fill="#d6d9de"/><path d="M89.2 13.4h11.7l-3.6 6.8H85.6z" fill="#d6d9de"/>
<path d="M108.8 6.3h14l2.3 2.3v13.2H108.8z" fill="#d6d9de"/><rect x="112.1" y="6.3" width="8.6" height="5.6" fill="#222933"/><rect x="113.8" y="7.2" width="5" height="3.8" fill="#d6d9de"/><rect x="112.1" y="15" width="9.6" height="6.8" fill="#222933"/><rect x="113.39999999999999" y="16.6" width="7" height="3.6" fill="#f2f3f5"/>
<path d="M133 6.3h14l2.3 2.3v13.2H133z" fill="#d6d9de"/><rect x="136.3" y="6.3" width="8.6" height="5.6" fill="#222933"/><rect x="138" y="7.2" width="5" height="3.8" fill="#d6d9de"/><rect x="136.3" y="15" width="9.6" height="6.8" fill="#222933"/><rect x="137.6" y="16.6" width="7" height="3.6" fill="#f2f3f5"/>
<path d="M141.2 21.4l1-3.6 6.2-6.6 2.7 2.6-6.3 6.6z" fill="#f0b247" stroke="#222933" stroke-width=".8"/><path d="M147.4 12.2l1.4-1.4 2.6 2.6-1.3 1.4z" fill="#e84a5f"/><path d="M136.8 17.2h4v4h-4z" fill="#222933"/><text x="137" y="21.2" font-size="4.5" fill="#fff" font-family="Liberation Sans">A</text>
<rect x="158" y="6.3" width="10.5" height="15.5" rx="1.2" fill="#8b919b"/><rect x="159.3" y="8.3" width="7.9" height="10.6" fill="#5c626d"/><path d="M164 15.4h3.2l1 1.2h4.4v5.2H164z" fill="#f0b247"/><path d="M164 21.8l1.4-3.6h7.6l-1.4 3.6z" fill="#f7d27a"/>
<rect x="185.2" y="6.3" width="9.7" height="15.5" rx="1.2" fill="#d6d9de"/><rect x="186.5" y="8.3" width="7.1" height="10.6" fill="#39414e"/><path d="M182.2 12.6h5.4v-2.4l3.8 3.4-3.8 3.4v-2.4h-5.4z" fill="#4fa8e8"/><rect x="188.6" y="19.6" width="3" height="1" fill="#39414e"/>
<rect x="208.2" y="6.3" width="9.8" height="5" fill="#f4f5f6"/><path d="M204.8 10.6h16.5v8.2h-16.5z" fill="#d6d9de"/><rect x="207.8" y="15.6" width="10.6" height="6.2" fill="#f4f5f6" stroke="#222933" stroke-width=".7"/><rect x="209.2" y="17.4" width="7.8" height="3.2" fill="#6db7ea"/>
<path d="M229.6 13.2l6.4-4.8v2.9c5.2 0 8.6 2.6 9.4 7.5-2-2.6-5-3.6-9.4-3.6v2.9z" fill="#d6d9de"/>
<path d="M252.2 12.0h5l-2.5 3z" fill="#c3c8d0"/>
<path d="M280 13.2l-6.4-4.8v2.9c-5.2 0-8.6 2.6-9.4 7.5 2-2.6 5-3.6 9.4-3.6v2.9z" fill="#596170"/>
<path d="M288.0 12.0h5l-2.5 3z" fill="#7c8491"/>
<rect x="300.8" y="9.4" width="8.4" height="1.5" fill="#c3c8d0" />
<path d="M300.8 12.2h8.4l-4.2 4.4z" fill="#c3c8d0"/>
<path d="M317.6 14.6L333.5 6.9 329.6 20.8 325 17.2 322.6 20.6 322.2 16z" fill="#4fa8e8"/><path d="M322.2 16L333.5 6.9 325 17.2z" fill="#2a7fc0"/>
<path d="M1257.5 10.4l4 3.6-4 3.6z" fill="#e4e7ec"/>
<circle cx="1455.3" cy="12.4" r="5" fill="none" stroke="#d6d9de" stroke-width="1.5"/><path d="M1459 16.2l4.6 4.8" stroke="#d6d9de" stroke-width="1.8"/>
<circle cx="1480.4" cy="10.6" r="3.9" fill="#5aaef0"/><path d="M1472.8 21.4c.4-4.6 3.4-6.6 7.6-6.6s7.2 2 7.6 6.6z" fill="#5aaef0"/>
<path d="M1579.0 13.0h5l-2.5 3z" fill="#c3c8d0"/>
<path d="M1595.6 8.2h2.4l2 7.6h7.2l1.6-5.4h-9.6" fill="none" stroke="#d6d9de" stroke-width="1.5"/><path d="M1599.2 10.4h9.6l-1.6 5.4h-7z" fill="#d6d9de"/><circle cx="1600.6" cy="18.8" r="1.5" fill="#d6d9de"/><circle cx="1606.6" cy="18.8" r="1.5" fill="#d6d9de"/>
<path d="M1626.5 7.6l-5.6 10.4M1626.5 7.6l5.6 10.4M1620.9 18h11.2" stroke="#d6d9de" stroke-width="2.2" fill="none"/><circle cx="1626.5" cy="8.6" r="2.3" fill="#d6d9de"/><circle cx="1620.9" cy="18" r="2.3" fill="#d6d9de"/><circle cx="1632.1" cy="18" r="2.3" fill="#d6d9de"/>
<path d="M1640.2 13.0h5l-2.5 3z" fill="#c3c8d0"/>
<rect x="1655.2" y="6.0" width="1.0" height="17.0" fill="#4a5260" />
<circle cx="1672.6" cy="14" r="8" fill="#d6d9de"/>
<text x="1669.4" y="18.6" font-family="Liberation Sans, sans-serif" font-size="13" fill="#222933" font-weight="bold" font-style="normal">?</text>
<path d="M1688.3 13.0h5l-2.5 3z" fill="#c3c8d0"/>
<path d="M1701.4 13.8a8.4 7.6 0 1 1 4.4 6.8l-4 1.2 1-3.4a7.4 7.4 0 0 1-1.4-4.6z" fill="#d6d9de"/><path d="M1704 16.2l8-5.4M1705.4 18.4l8.4-5.8M1708 19.8l6.4-4.4" stroke="#222933" stroke-width=".9"/>
<path d="M1799.6 13.5h10.6" stroke="#d6d9de" stroke-width="1.1"/>
<rect x="1845.6" y="10.6" width="8" height="8" rx="1.4" fill="#222933" stroke="#d6d9de" stroke-width="1.1"/><path d="M1848 10.4v-1.6q0-.8 .8-.8h6.4q1.2 0 1.2 1.2v6.4q0 .8-.8.8h-1.6" fill="none" stroke="#d6d9de" stroke-width="1.1"/>
<path d="M1891.8 8.6l10.6 10.6m0-10.6l-10.6 10.6" stroke="#d6d9de" stroke-width="1.2"/>
<path d="M8.4 90.6L37.5 61.6" stroke="#d6d9de" stroke-width="1.3"/><rect x="6.8" y="89.0" width="3.2" height="3.2" fill="#62aee6"/><rect x="35.9" y="60.0" width="3.2" height="3.2" fill="#62aee6"/>
<path d="M51.5 83.5H71.3C85.6 83.5 85.6 68.4 71.3 68.4" stroke="#d6d9de" stroke-width="1.3" fill="none"/><rect x="49.9" y="81.9" width="3.2" height="3.2" fill="#62aee6"/><rect x="69.7" y="81.9" width="3.2" height="3.2" fill="#62aee6"/><rect x="69.7" y="66.8" width="3.2" height="3.2" fill="#62aee6"/>
<circle cx="115.4" cy="75.6" r="15.2" fill="none" stroke="#d6d9de" stroke-width="1.3"/><path d="M115.4 75.6l7.6-7.6" stroke="#62aee6" stroke-width="1.3"/><path d="M124.6 66.4l-1 4.6-3.6-3.6z" fill="#62aee6"/><rect x="113.9" y="74.1" width="3" height="3" fill="#62aee6"/>
<path d="M149.4 89.7Q151 68 176.3 62.5" stroke="#d6d9de" stroke-width="1.3" fill="none"/><rect x="147.8" y="88.1" width="3.2" height="3.2" fill="#62aee6"/><rect x="156.2" y="68.8" width="3.2" height="3.2" fill="#62aee6"/><rect x="174.7" y="60.9" width="3.2" height="3.2" fill="#62aee6"/>
<rect x="189.5" y="64.4" width="12" height="9.4" fill="none" stroke="#d6d9de" stroke-width="1.3"/><rect x="188.3" y="63.2" width="2.4" height="2.4" fill="#d6d9de"/><rect x="200.3" y="72.6" width="2.4" height="2.4" fill="#d6d9de"/>
<ellipse cx="194.1" cy="93" rx="6.6" ry="4.5" fill="none" stroke="#d6d9de" stroke-width="1.3" stroke-dasharray="9 2.5"/><rect x="193.2" y="92.1" width="1.8" height="1.8" fill="#62aee6"/><rect x="193.2" y="86.9" width="1.8" height="1.8" fill="#62aee6"/><rect x="200.1" y="92.1" width="1.8" height="1.8" fill="#62aee6"/>
<rect x="190.8" y="112.8" width="9" height="9" fill="#8fb8c9"/><path d="M191 120l7-7M193.5 121.8l6.3-6.3M191 116.5l3.5-3.5M197 121.8l2.8-2.8" stroke="#3b4453" stroke-width=".8"/><path d="M190.8 110.6v13.6M199.8 110.6v13.6M188.4 112.8h13.8M188.4 121.8h13.8" stroke="#d6d9de" stroke-width="1.2"/>
<path d="M240.6 61.4l3 3.6h-2v2.6h2.6v-2l3.6 3-3.6 3v-2h-2.6v2.6h2l-3 3.6-3-3.6h2v-2.6h-2.6v2l-3.6-3 3.6-3v2h2.6v-2.6h-2z" fill="#d6d9de"/>
<circle cx="237" cy="88.6" r="2.9" fill="none" stroke="#d6d9de" stroke-width="1.2"/><path d="M241.6 86.6h4.4v4" stroke="#d6d9de" stroke-width="1.3" fill="none"/><path d="M246 93l-2.4-3h4.8z" fill="#d6d9de"/><circle cx="240.6" cy="97.4" r="2.9" fill="none" stroke="#8cc3ea" stroke-width="1.2"/><circle cx="245" cy="97.4" r="2.9" fill="none" stroke="#8cc3ea" stroke-width="1.2"/>
<path d="M233.6 109.8h5.6v14.6h-5.6z" fill="none" stroke="#d6d9de" stroke-width="1.2"/><path d="M241.8 109.8h2.6l4.4 14.6h-7" fill="none" stroke="#d6d9de" stroke-width="1.2"/><path d="M238.6 120.6h5M243.6 120.6l-2.2-1.8v3.6z" stroke="#d6d9de" stroke-width="1" fill="#d6d9de"/>
<path d="M316.8 64.4A6.8 6.8 0 1 0 319.6 71" fill="none" stroke="#d6d9de" stroke-width="1.3"/><path d="M313.6 61.4l4.4 2.6-3.6 3.4z" fill="#d6d9de"/>
<path d="M311.6 87.4v11.6h-5.6z" fill="none" stroke="#d6d9de" stroke-width="1.1"/><path d="M314 87.4v11.6h5.6z" fill="none" stroke="#7dbdf0" stroke-width="1.1"/>
<path d="M305.6 109.8h14.6v14.6h-3.6M305.6 109.8v4" fill="none" stroke="#d6d9de" stroke-width="1.2"/><rect x="305.6" y="115.8" width="8.6" height="8.6" fill="none" stroke="#d6d9de" stroke-width="1.2"/>
<path d="M374.6 62.4h15.6" stroke="#d6d9de" stroke-width="1.2" stroke-dasharray="2 1.4"/><path d="M378.4 63.2l5.8 9.4M386.6 63.2l-4.4 9.4" stroke="#d6d9de" stroke-width="1.7"/><circle cx="381.6" cy="74.8" r="1.8" fill="none" stroke="#d6d9de" stroke-width="1.1"/><circle cx="386.4" cy="73.4" r="1.8" fill="none" stroke="#d6d9de" stroke-width="1.1"/>
<path d="M374.8 100.6v-7.4" stroke="#d6d9de" stroke-width="1.2" stroke-dasharray="2 1.4"/><path d="M374.8 93.2Q374.8 86 382.6 86" fill="none" stroke="#d6d9de" stroke-width="1.3"/><path d="M383.4 86h6.4" stroke="#d6d9de" stroke-width="1.2" stroke-dasharray="2 1.4"/>
<rect x="375.2" y="110.6" width="5" height="4.8" fill="none" stroke="#d6d9de" stroke-width="1.1"/>
<rect x="383.4" y="110.6" width="5" height="4.8" fill="none" stroke="#d6d9de" stroke-width="1.1"/>
<rect x="375.2" y="118.4" width="5" height="4.8" fill="none" stroke="#7dbdf0" stroke-width="1.1"/>
<rect x="383.4" y="118.4" width="5" height="4.8" fill="none" stroke="#7dbdf0" stroke-width="1.1"/>
<path d="M452.2 72.6l9-10 3.6 3-9 10.2z" fill="#f0b870"/><path d="M461.2 62.6l2.4-1.6 1.6 2.2-.4 2.4z" fill="#f7e3a0"/><path d="M452.2 72.6l3.6 3.2-2 1.4-3-1.4z" fill="#e8475d"/><path d="M449.4 77h15.6" stroke="#d6d9de" stroke-width="1"/>
<path d="M449.6 90h10.6v10.2h-10.6zM449.6 90l4.6-3.8h10.6l-4.6 3.8M464.8 86.2v10.4l-4.6 3.6" fill="none" stroke="#a9d4f5" stroke-width="1.1"/><rect x="452" y="92.4" width="6" height="5.6" fill="none" stroke="#d6d9de" stroke-width="1"/>
<path d="M465 111h-9.6a5.8 5.8 0 0 0 0 11.6h9.6" fill="none" stroke="#a9d4f5" stroke-width="1.2"/><path d="M465 114h-9.4a2.8 2.8 0 0 0 0 5.6h9.4" fill="none" stroke="#d6d9de" stroke-width="1.2"/>
<text x="487.2" y="89.8" font-family="Liberation Sans, sans-serif" font-size="38.5" fill="#d3d7dc" font-weight="normal" font-style="normal" textLength="25.4" lengthAdjust="spacingAndGlyphs">A</text>
<path d="M536.4 60v31.8M567.5 60v31.8M538.4 66h27.2" stroke="#d6d9de" stroke-width="1.2" fill="none"/><path d="M537 66l3.6-2.2v4.4zM567 66l-3.6-2.2v4.4z" fill="#d6d9de"/>
<path d="M547.0 88.6L541.6 88.6" stroke="#f4e36a" stroke-width="2.4" stroke-linecap="round"/>
<path d="M549.0 88.6L547.0 88.6" stroke="#e8475d" stroke-width="1.3"/>
<path d="M548.3 85.3L544.5 81.5" stroke="#f4e36a" stroke-width="2.4" stroke-linecap="round"/>
<path d="M549.8 86.8L548.3 85.3" stroke="#e8475d" stroke-width="1.3"/>
<path d="M551.6 84.0L551.6 78.6" stroke="#f7ef8a" stroke-width="2.4" stroke-linecap="round"/>
<path d="M551.6 86.0L551.6 84.0" stroke="#e8475d" stroke-width="1.3"/>
<path d="M554.9 85.3L558.7 81.5" stroke="#f4e36a" stroke-width="2.4" stroke-linecap="round"/>
<path d="M553.4 86.8L554.9 85.3" stroke="#e8475d" stroke-width="1.3"/>
<path d="M556.2 88.6L561.6 88.6" stroke="#f4e36a" stroke-width="2.4" stroke-linecap="round"/>
<path d="M554.2 88.6L556.2 88.6" stroke="#e8475d" stroke-width="1.3"/>
<path d="M589.6 61.8v14.4M604.6 61.8v14.4" stroke="#d6d9de" stroke-width="1.2"/><path d="M590.6 66.3h13" stroke="#7dbdf0" stroke-width="1.2"/><path d="M590.2 66.3l2.6-1.6v3.2zM604 66.3l-2.6-1.6v3.2z" fill="#7dbdf0"/>
<circle cx="601.7" cy="89.6" r="2.9" fill="none" stroke="#d6d9de" stroke-width="1.2"/><path d="M598.8 90.2c-3.6 0-3.6 2.4-5 5.4l-2.6 3" fill="none" stroke="#d6d9de" stroke-width="1.2"/><path d="M589.4 100l.6-4 3 2.4z" fill="#d6d9de"/>
<rect x="589.6" y="110.6" width="15" height="12.8" fill="none" stroke="#d6d9de" stroke-width="1.2"/><path d="M589.6 113.8h15M589.6 117h15M589.6 120.2h15M594.6 113.8v9.6M599.6 113.8v9.6" stroke="#d6d9de" stroke-width="1"/>
<path d="M690.6 60.0h20.4l-10.6 10.6h-20.4z" fill="#c9cdd3"/>
<path d="M687.4 73.4h20.4l-7.4 7.4h-20.4z" fill="#dfe2e6"/><path d="M687.4 79.6h20.4l-7.4 7.4h-20.4z" fill="#c9cdd3"/>
<rect x="698.7" y="74.1" width="13.7" height="17.6" rx="1" fill="#f1f2f4"/><rect x="700.6" y="76" width="9.9" height="6.2" fill="#63b4f2"/><path d="M701.6 85.4h7.4M702.4 88.6h7.4" stroke="#39414e" stroke-width="1"/><path d="M709.6 85.4l-2-1.4v2.8zM701.8 88.6l2-1.4v2.8z" fill="#39414e"/>
<circle cx="739" cy="66.6" r="5.2" fill="#f8c560"/><rect x="736.6" y="71.6" width="4.8" height="2.8" rx=".8" fill="#f1f2f4"/>
<circle cx="757.7" cy="68.6" r="3.9" fill="#f8c560"/>
<path d="M762.9 68.6L764.9 68.6" stroke="#f8c560" stroke-width="1.1"/>
<path d="M761.4 72.3L762.8 73.7" stroke="#f8c560" stroke-width="1.1"/>
<path d="M757.7 73.8L757.7 75.8" stroke="#f8c560" stroke-width="1.1"/>
<path d="M754.0 72.3L752.6 73.7" stroke="#f8c560" stroke-width="1.1"/>
<path d="M752.5 68.6L750.5 68.6" stroke="#f8c560" stroke-width="1.1"/>
<path d="M754.0 64.9L752.6 63.5" stroke="#f8c560" stroke-width="1.1"/>
<path d="M757.7 63.4L757.7 61.4" stroke="#f8c560" stroke-width="1.1"/>
<path d="M761.4 64.9L762.8 63.5" stroke="#f8c560" stroke-width="1.1"/>
<rect x="770" y="62" width="12" height="11.6" fill="none" stroke="#d6d9de" stroke-width="1.2" stroke-dasharray="4 3"/><rect x="772.6" y="64.6" width="6.8" height="6.4" fill="#8b93a0"/><circle cx="780.4" cy="72.6" r="2.6" fill="#f8e27a"/>
<path d="M783.8 72.6L785.0 72.6" stroke="#f8e27a" stroke-width=".8"/>
<path d="M782.8 75.0L783.7 75.9" stroke="#f8e27a" stroke-width=".8"/>
<path d="M780.4 76.0L780.4 77.2" stroke="#f8e27a" stroke-width=".8"/>
<path d="M778.0 75.0L777.1 75.9" stroke="#f8e27a" stroke-width=".8"/>
<path d="M777.0 72.6L775.8 72.6" stroke="#f8e27a" stroke-width=".8"/>
<path d="M778.0 70.2L777.1 69.3" stroke="#f8e27a" stroke-width=".8"/>
<path d="M780.4 69.2L780.4 68.0" stroke="#f8e27a" stroke-width=".8"/>
<path d="M782.8 70.2L783.7 69.3" stroke="#f8e27a" stroke-width=".8"/>
<rect x="789" y="67.6" width="11.4" height="8" fill="#f6a94a"/><path d="M796.2 67.6v-3a3 3 0 0 1 6 0v1.8" fill="none" stroke="#f8d36a" stroke-width="1.5"/><rect x="794" y="70.2" width="1.4" height="2.8" fill="#39414e"/>
<path d="M736.7 86.0h8.4l-4.4 3.6h-8.4z" fill="#cdd1d7"/><circle cx="743.6999999999999" cy="95" r="3.3" fill="#62d2d8"/><rect x="742.0999999999999" y="98.4" width="3.2" height="2" fill="#f1f2f4"/>
<path d="M758.8 86.0h8.4l-3 2.4h-8.4z" fill="#cdd1d7"/><path d="M758.8 89.2h8.4l-3 2.4h-8.4z" fill="#e2e5e9"/><path d="M758.8 92.4h8.4l-3 2.4h-8.4z" fill="#cdd1d7"/><path d="M770.8 94.4l-5.6 5.6" stroke="#d6d9de" stroke-width="1.3"/><path d="M764.1999999999999 101l.6-3.8 3.2 3.2z" fill="#d6d9de"/>
<path d="M784.3 86.0h8.4l-4.4 3.6h-8.4z" fill="#cdd1d7"/><g stroke="#62d2d8" stroke-width="1.1"><path d="M791.5 92.4v8.4M787.9 94.5l7.2 4.2M795.1 94.5l-7.2 4.2"/></g>
<path d="M808.3 86.0h8.4l-4.4 3.6h-8.4z" fill="#cdd1d7"/><rect x="812.1" y="95.6" width="7.2" height="5.6" fill="#46c7b4"/><path d="M813.6999999999999 95.6v-1.6a2 2 0 0 1 4 0v1.6" fill="none" stroke="#46c7b4" stroke-width="1.2"/>
<path d="M832.0 89.4h8.4l-3 2.4h-8.4z" fill="#cdd1d7"/><path d="M832.0 92.6h8.4l-3 2.4h-8.4z" fill="#e2e5e9"/><path d="M832.0 95.8h8.4l-3 2.4h-8.4z" fill="#cdd1d7"/><path d="M831.4 90.4h9l-4 3.4h-9z" fill="#63b4f2"/><circle cx="836.2" cy="88" r="2.5" fill="#dfe2e6"/>
<path d="M734.3 109.6h8.4l-3 2.4h-8.4z" fill="#cdd1d7"/><path d="M734.3 112.8h8.4l-3 2.4h-8.4z" fill="#e2e5e9"/><path d="M734.3 116.0h8.4l-3 2.4h-8.4z" fill="#cdd1d7"/><circle cx="743.6999999999999" cy="118.6" r="3.4" fill="#f8b76a"/><rect x="742.0999999999999" y="122.19999999999999" width="3.2" height="2" fill="#f1f2f4"/>
<path d="M758.8 109.6h8.4l-3 2.4h-8.4z" fill="#cdd1d7"/><path d="M758.8 112.8h8.4l-3 2.4h-8.4z" fill="#e2e5e9"/><path d="M758.8 116.0h8.4l-3 2.4h-8.4z" fill="#cdd1d7"/><path d="M764.8 124.6l5.6-5.6" stroke="#d6d9de" stroke-width="1.3"/><path d="M771.5999999999999 117.8l-.6 3.8-3.2-3.2z" fill="#d6d9de"/>
<path d="M781.9 109.6h8.4l-3 2.4h-8.4z" fill="#cdd1d7"/><path d="M781.9 112.8h8.4l-3 2.4h-8.4z" fill="#e2e5e9"/><path d="M781.9 116.0h8.4l-3 2.4h-8.4z" fill="#cdd1d7"/><circle cx="791.5" cy="120.19999999999999" r="2.6" fill="#f8c560"/>
<path d="M795.0 120.2L796.3 120.2" stroke="#f8c560" stroke-width=".9"/>
<path d="M794.0 122.7L794.9 123.6" stroke="#f8c560" stroke-width=".9"/>
<path d="M791.5 123.7L791.5 125.0" stroke="#f8c560" stroke-width=".9"/>
<path d="M789.0 122.7L788.1 123.6" stroke="#f8c560" stroke-width=".9"/>
<path d="M788.0 120.2L786.7 120.2" stroke="#f8c560" stroke-width=".9"/>
<path d="M789.0 117.7L788.1 116.8" stroke="#f8c560" stroke-width=".9"/>
<path d="M791.5 116.7L791.5 115.4" stroke="#f8c560" stroke-width=".9"/>
<path d="M794.0 117.7L794.9 116.8" stroke="#f8c560" stroke-width=".9"/>
<path d="M808.3 109.6h8.4l-4.4 3.6h-8.4z" fill="#cdd1d7"/><rect x="809.3" y="120.0" width="7.4" height="5.4" fill="#f6c34a"/><path d="M814.3 120.0v-1.8a2.1 2.1 0 0 1 4.2 0v1" fill="none" stroke="#f8d36a" stroke-width="1.2"/>
<path d="M830.0 109.6h8.4l-3 2.4h-8.4z" fill="#cdd1d7"/><path d="M830.0 112.8h8.4l-3 2.4h-8.4z" fill="#e2e5e9"/><path d="M830.0 116.0h8.4l-3 2.4h-8.4z" fill="#cdd1d7"/><path d="M835.2 120.6l3-3 5 5-3 3z" fill="#f2cf5a"/><path d="M838.2 117.6l2.2-2.6 1.2 2 2-.8-.6 2 2.2 1-2 2.4z" fill="#f1f2f4"/>
<path d="M958.2 57.9h11.3l5.6 5.4v18.6h-16.9z" fill="#7fc1f5"/><path d="M969.5 57.9v5.4h5.6z" fill="#c5e3fb"/>
<rect x="944.4" y="68.6" width="20.6" height="13.6" fill="#7a818c" stroke="#e6e8eb" stroke-width="1.1"/><circle cx="964.7" cy="82.6" r="7.2" fill="#7a818c" fill-opacity=".92" stroke="#c9cdd3" stroke-width="1.1"/><path d="M964.7 75.4v7.2h-7.2" fill="none" stroke="#c9cdd3" stroke-width=".8"/><rect x="942.8" y="80.6" width="3" height="3" fill="#e6e8eb"/>
<path d="M984.6999999999999 74.39999999999999v-7h8.8v3" fill="none" stroke="#d6d9de" stroke-width="1.2"/><path d="M983.3 74.39999999999999h8" stroke="#d6d9de" stroke-width="1.2"/><circle cx="993.6999999999999" cy="73.39999999999999" r="3.4" fill="#7a818c" stroke="#d6d9de" stroke-width="1"/><path d="M995 61l1.1 2.6 2.8-.8-1.4 2.5 2.4 1.6-2.8.5.2 2.9-2.3-1.8-2.3 1.8.2-2.9-2.8-.5 2.4-1.6-1.4-2.5 2.8.8z" fill="#f8dc5a"/>
<path d="M984.6999999999999 98.39999999999999v-7h8.8v3" fill="none" stroke="#d6d9de" stroke-width="1.2"/><path d="M983.3 98.39999999999999h8" stroke="#d6d9de" stroke-width="1.2"/><circle cx="993.6999999999999" cy="97.39999999999999" r="3.4" fill="#7a818c" stroke="#d6d9de" stroke-width="1"/><path d="M990.6 94.4l.8-3 6-6.2 2.2 2.2-6 6.2z" fill="#f3c98a"/><path d="M997.4 85.2l1.4-1.4 2.2 2.2-1.4 1.4z" fill="#e8475d"/>
<path d="M983.6 110.4h8.6l6.8 6.6-7.2 7-8.2-8z" fill="#d6d9de"/><circle cx="986.6" cy="113.6" r="1.3" fill="#3b4453"/><path d="M987.6 118.4l2.6 2.6 4.6-5" fill="none" stroke="#3b4453" stroke-width="1.4"/><path d="M991 118.2l.8-3 5.6-5.8 2.2 2.2-5.6 5.8z" fill="#f3c98a"/><path d="M997.4 109.4l1.2-1.2 2.2 2.2-1.2 1.2z" fill="#e8475d"/>
<rect x="1116.1" y="60.1" width="19.8" height="27.7" fill="#dcdfe3"/><rect x="1118.3" y="62.4" width="13.7" height="10.4" fill="#7fc1f5" stroke="#5b8fc0" stroke-width=".6"/><path d="M1119 78h6M1119 83.4h8M1128 78h5" stroke="#6a717c" stroke-width="1.2"/><path d="M1122.2 75.8v4.4M1125.6 81.2v4.4" stroke="#6a717c" stroke-width="1.4"/>
<path d="M1130 82.6l4.4-4.2 8.6 9-4.4 4.3z" fill="#f6cc52" stroke="#39414e" stroke-width=".7"/><path d="M1134.4 78.4l3.4-3.6 1.6 2.4 2.6-1.6-.8 3 3 .6-2.2 2-3.2 2.8z" fill="#f4f5f6"/>
<path d="M1171.1 68.9L1171.10 60.90A8 8 0 0 1 1176.76 63.24z" fill="#f7a13c"/>
<path d="M1171.1 68.9L1176.76 63.24A8 8 0 0 1 1179.10 68.90z" fill="#f2614a"/>
<path d="M1171.1 68.9L1179.10 68.90A8 8 0 0 1 1176.76 74.56z" fill="#e0507a"/>
<path d="M1171.1 68.9L1176.76 74.56A8 8 0 0 1 1171.10 76.90z" fill="#8a5be6"/>
<path d="M1171.1 68.9L1171.10 76.90A8 8 0 0 1 1165.44 74.56z" fill="#4d7df0"/>
<path d="M1171.1 68.9L1165.44 74.56A8 8 0 0 1 1163.10 68.90z" fill="#2bb7c8"/>
<path d="M1171.1 68.9L1163.10 68.90A8 8 0 0 1 1165.44 63.24z" fill="#3fbf6a"/>
<path d="M1171.1 68.9L1165.44 63.24A8 8 0 0 1 1171.10 60.90z" fill="#9ccf4a"/>
<rect x="1163.0" y="86.0" width="15.8" height="1.2" fill="#e8eaed" />
<rect x="1163.0" y="89.6" width="15.8" height="2.0" fill="#e8eaed" />
<rect x="1163.0" y="93.8" width="15.8" height="2.8" fill="#e8eaed" />
<rect x="1163.0" y="98.4" width="15.8" height="3.4" fill="#e8eaed" />
<path d="M1163 110.8h15.8" stroke="#e1e4e8" stroke-width="1.4" stroke-dasharray="1 1"/>
<path d="M1163 114.2h15.8" stroke="#e1e4e8" stroke-width="1.4" stroke-dasharray="3 1.4"/>
<path d="M1163 117.6h15.8" stroke="#e1e4e8" stroke-width="1.4" stroke-dasharray="5 1.6 1.6 1.6"/>
<path d="M1163 121h15.8" stroke="#e1e4e8" stroke-width="1.4" stroke-dasharray="6 2"/>
<path d="M1163 123.6h15.8" stroke="#e1e4e8" stroke-width="1.4" stroke-dasharray="2 1"/>
<path d="M1373.4 65h-4.3v26h4.3M1387 79.4v11.6h-4.3" fill="none" stroke="#d6d9de" stroke-width="1.3"/>
<rect x="1375.2" y="68.6" width="9.6" height="7.6" fill="#3f7fb8" stroke="#7fc1f5" stroke-width="1"/><circle cx="1380" cy="83.6" r="4.8" fill="#8b919b" stroke="#c9cdd3" stroke-width="1"/>
<path d="M1392.8 61.0 L1393.9 65.2 L1397.1 62.4 L1395.6 66.4 L1399.8 66.1 L1396.2 68.4 L1399.8 70.7 L1395.6 70.4 L1397.1 74.4 L1393.9 71.6 L1392.8 75.8 L1391.7 71.6 L1388.5 74.4 L1390.0 70.4 L1385.8 70.7 L1389.4 68.4 L1385.8 66.1 L1390.0 66.4 L1388.5 62.4 L1391.7 65.2z" fill="#f8dc5a"/>
<rect x="1412.2" y="63" width="5.6" height="4.6" fill="#3f7fb8" stroke="#9ccdf1" stroke-width=".9"/><circle cx="1415" cy="72.6" r="2.7" fill="#8b919b" stroke="#d6d9de" stroke-width=".9"/><path d="M1420.6 61.6h2.6v15h-2.6" fill="none" stroke="#d6d9de" stroke-width="1.1"/><path d="M1420.2 66l5.8 5.8m0-5.8l-5.8 5.8" stroke="#f0465c" stroke-width="1.6"/>
<path d="M1412.6 85.6h-2.4v13.6h2.4M1420 85.6h2.4v5" fill="none" stroke="#d6d9de" stroke-width="1.1"/><rect x="1413.8" y="87.4" width="4.6" height="3.8" fill="#3f7fb8" stroke="#9ccdf1" stroke-width=".9"/><circle cx="1416" cy="95.4" r="2.5" fill="#8b919b" stroke="#d6d9de" stroke-width=".9"/><path d="M1417.4 100.2l.8-2.8 5.4-5.4 2 2-5.4 5.4z" fill="#f6cc52"/><path d="M1423.6 92l1.2-1.2 2 2-1.2 1.2z" fill="#e8475d"/>
<rect x="1406.4" y="106.4" width="23.2" height="21.2" fill="#2c4664" stroke="#4f93d6" stroke-width="1"/>
<path d="M1413 109.6h-2.4v14h2.4M1419.6 109.6h2.4v3" fill="none" stroke="#d6d9de" stroke-width="1.1"/><rect x="1413.8" y="111.2" width="4.8" height="4" fill="#3f9f6a" stroke="#8fe0b0" stroke-width=".9"/><circle cx="1416.2" cy="119.6" r="2.5" fill="#3f9f6a" stroke="#8fe0b0" stroke-width=".9"/><path d="M1419.6 114.6v9.4l2.2-2 1.6 3.4 1.5-.7-1.6-3.3h2.9z" fill="#ffffff" stroke="#2c4664" stroke-width=".5"/>
<rect x="1454.6" y="72.8" width="28.6" height="6.3" fill="#f3c24f"/>
<path d="M1456.6 72.8v3" stroke="#a87c1c" stroke-width=".7"/>
<path d="M1458.7 72.8v2" stroke="#a87c1c" stroke-width=".7"/>
<path d="M1460.7 72.8v3" stroke="#a87c1c" stroke-width=".7"/>
<path d="M1462.8 72.8v2" stroke="#a87c1c" stroke-width=".7"/>
<path d="M1464.8 72.8v3" stroke="#a87c1c" stroke-width=".7"/>
<path d="M1466.8 72.8v2" stroke="#a87c1c" stroke-width=".7"/>
<path d="M1468.9 72.8v3" stroke="#a87c1c" stroke-width=".7"/>
<path d="M1470.9 72.8v2" stroke="#a87c1c" stroke-width=".7"/>
<path d="M1473.0 72.8v3" stroke="#a87c1c" stroke-width=".7"/>
<path d="M1475.0 72.8v2" stroke="#a87c1c" stroke-width=".7"/>
<path d="M1477.0 72.8v3" stroke="#a87c1c" stroke-width=".7"/>
<path d="M1479.1 72.8v2" stroke="#a87c1c" stroke-width=".7"/>
<path d="M1481.1 72.8v3" stroke="#a87c1c" stroke-width=".7"/>
<path d="M1507 63.8v10l2.4-2 1.6 3.6 1.6-.7-1.6-3.5h3.1z" fill="#ffffff"/><rect x="1513.2" y="68.6" width="9.8" height="8.4" fill="#e9ebee"/><path d="M1515 71h1.4M1517.6 71h4M1515 73h1.4M1517.6 73h4M1515 75h1.4M1517.6 75h4" stroke="#3b78b4" stroke-width="1"/><path d="M1517 61l-2.6 4h2.2l-1 3.4 3.8-4.6h-2.2l1.6-2.8z" fill="#f6cc52"/>
<rect x="1507.2" y="85.8" width="13.6" height="13.6" fill="none" stroke="#4fb58a" stroke-width="1.1" stroke-dasharray="1.8 1.2"/><path d="M1509.6 88.4h5v2.6h3.6v6.2h-8.6z" fill="#4fb58a" stroke="#a6e6c8" stroke-width=".7"/>
<path d="M1516.4 90.6v9.6l2.3-2 1.6 3.5 1.6-.7-1.6-3.5h3z" fill="#ffffff" stroke="#3b4453" stroke-width=".4"/>
<rect x="1509" y="108.6" width="12" height="16.2" rx=".8" fill="#d6d9de"/><rect x="1510.6" y="110.2" width="8.8" height="2.8" fill="#5a616c"/>
<rect x="1510.6" y="114.4" width="2.3" height="2.3" fill="#5a616c"/>
<rect x="1513.8" y="114.4" width="2.3" height="2.3" fill="#5a616c"/>
<rect x="1517.0" y="114.4" width="2.3" height="2.3" fill="#5a616c"/>
<rect x="1510.6" y="117.7" width="2.3" height="2.3" fill="#5a616c"/>
<rect x="1513.8" y="117.7" width="2.3" height="2.3" fill="#5a616c"/>
<rect x="1517.0" y="117.7" width="2.3" height="2.3" fill="#5a616c"/>
<rect x="1510.6" y="121.0" width="2.3" height="2.3" fill="#5a616c"/>
<rect x="1513.8" y="121.0" width="2.3" height="2.3" fill="#5a616c"/>
<rect x="1517.0" y="121.0" width="2.3" height="2.3" fill="#5a616c"/>
<rect x="1543.8" y="62.4" width="22.1" height="25.4" rx="1.2" fill="#d9a664"/><rect x="1550.2" y="60.2" width="9.4" height="4.6" rx="1" fill="#eceef0"/><path d="M1552.3 70.2h11.5l6 6v15.5h-17.5z" fill="#e6e8ea"/><path d="M1563.8 70.2v6h6z" fill="#fafafa"/>
<rect x="1587" y="61.4" width="10.8" height="10.4" fill="#d6d9de"/><path d="M1588.6 63.8h7.4M1588.6 66.4h5M1588.6 69h7" stroke="#4a5260" stroke-width="1"/><path d="M1593.6 64.6l6 8.6M1601.4 64.6l-5.6 8.6" stroke="#f4f5f6" stroke-width="1.3"/><circle cx="1594.6" cy="75" r="1.6" fill="none" stroke="#f4f5f6" stroke-width="1"/><circle cx="1600.6" cy="75" r="1.6" fill="none" stroke="#f4f5f6" stroke-width="1"/>
<path d="M1588.2 85.4h5.6l2 2v8.8h-7.6z" fill="#d6d9de"/><path d="M1592 89.2h5.8l3.2 3.2v7.8h-9z" fill="#eceef0" stroke="#3b4453" stroke-width=".8"/>
<path d="M1635.6 63.8h14.2v11.7h18.1v12.5h-32.3z" fill="#e3e5e8"/>
<rect x="1430.8" y="1012.6" width="40.8" height="24.2" fill="#3b4453" />
<text x="1435.0" y="1028.2" font-family="Liberation Sans, sans-serif" font-size="11.5" fill="#e4e7ec" font-weight="normal" font-style="normal" textLength="33.6" lengthAdjust="spacingAndGlyphs">PAPER</text>
<rect x="1474.0" y="1012.6" width="169.0" height="24.2" fill="#3b4453" />
<rect x="1474.8" y="1013.8" width="22.4" height="22.2" fill="#5d8fce" />
<rect x="1579.8" y="1013.8" width="22.4" height="22.2" fill="#5d8fce" />
<rect x="1603.9" y="1013.8" width="22.2" height="22.2" fill="#5d8fce" />
<path d="M1479 1017v15.4h15.4M1479 1028.4h4v4" fill="none" stroke="#ffffff" stroke-width="1.2"/>
<circle cx="1508.6" cy="1025" r="6.2" fill="none" stroke="#d6d9de" stroke-width="1.2"/><path d="M1508.6 1025h9M1508.6 1025l7.4-7.6" stroke="#d6d9de" stroke-width="1.2"/>
<path d="M1526.3 1022.6h7l-3.5 4z" fill="#e4e7ec"/>
<path d="M1549.6 1016.6v16.4" stroke="#5fd6a4" stroke-width="1.2"/><path d="M1543 1017.6l13 15" stroke="#e86a7a" stroke-width="1.1"/><rect x="1548" y="1023" width="3.2" height="3.2" fill="#3b4453" stroke="#d6d9de" stroke-width=".9"/>
<path d="M1566.3 1022.6h7l-3.5 4z" fill="#e4e7ec"/>
<path d="M1583.6 1030.6h14.6M1583.6 1030.6l12.4-11.6" stroke="#ffffff" stroke-width="1.3" fill="none"/><rect x="1588.6" y="1023.4" width="3" height="3" fill="#ffffff"/>
<rect x="1609.6" y="1018.6" width="12.6" height="12.8" fill="none" stroke="#ffffff" stroke-width="1.3"/><rect x="1607.4" y="1016.6" width="3.8" height="3.8" fill="#5d8fce" stroke="#ffffff" stroke-width="1"/>
<path d="M1631.1 1022.6h7l-3.5 4z" fill="#e4e7ec"/>
<rect x="1645.8" y="1012.6" width="73.0" height="24.2" fill="#3b4453" />
<rect x="1721.7" y="1012.6" width="39.3" height="24.2" fill="#3b4453" />
<rect x="1761.9" y="1012.6" width="24.7" height="24.2" fill="#3b4453" />
<rect x="1788.8" y="1012.6" width="24.7" height="24.2" fill="#3b4453" />
<rect x="1815.7" y="1012.6" width="48.9" height="24.2" fill="#3b4453" />
<rect x="1867.5" y="1012.6" width="24.1" height="24.2" fill="#3b4453" />
<rect x="1893.8" y="1012.6" width="24.0" height="24.2" fill="#3b4453" />
<rect x="1761.0" y="1012.6" width="0.9" height="24.2" fill="#2d3440" />
<rect x="1650.6" y="1018" width="15" height="14" fill="none" stroke="#d6d9de" stroke-width="1.2" stroke-dasharray="3 2"/><rect x="1657" y="1024.4" width="6" height="5.6" fill="none" stroke="#d6d9de" stroke-width="1.1"/><path d="M1650 1017.4l5.6 5.6M1650 1017.4h3.6M1650 1017.4v3.6" stroke="#d6d9de" stroke-width="1.3" fill="none"/>
<path d="M1679.6 1017.2l-6.6 15 6.6-5 6.6 5z" fill="#d6d9de"/><path d="M1679.6 1021.4l-1.8 5 1.8-1.2 1.8 1.2z" fill="#3b4453"/><circle cx="1688" cy="1019.8" r="2.3" fill="none" stroke="#d6d9de" stroke-width="1"/>
<path d="M1703.6 1017.2l-6.6 15 6.6-5 6.6 5z" fill="#d6d9de"/><path d="M1703.6 1021.4l-1.8 5 1.8-1.2 1.8 1.2z" fill="#3b4453"/><path d="M1711.6 1015.6l-2.8 4h2l-1.2 3.6 3.8-4.8h-2l1.4-2.8z" fill="#d6d9de"/>
<circle cx="1732.6" cy="1024.6" r="4.6" fill="none" stroke="#d6d9de" stroke-width="3.2"/><circle cx="1732.6" cy="1024.6" r="7" fill="none" stroke="#d6d9de" stroke-width="2.4" stroke-dasharray="2.75 2.75"/>
<path d="M1749.5 1022.6h7l-3.5 4z" fill="#e4e7ec"/>
<path d="M1765.8 1024.6h16.4M1774 1016.4v16.4" stroke="#d6d9de" stroke-width="1.5"/>
<rect x="1792.8" y="1017" width="6" height="6" fill="none" stroke="#d6d9de" stroke-width="1.1"/><circle cx="1805.4" cy="1023.8" r="3" fill="none" stroke="#d6d9de" stroke-width="1.1"/><path d="M1799.4 1026.6l3.2 5.6h-6.4z" fill="none" stroke="#d6d9de" stroke-width="1.1"/>
<rect x="1818.6" y="1015.4" width="14" height="10" fill="#3f6fb4"/><path d="M1822.2 1015.6v9M1821 1019h11" stroke="#9fd4fa" stroke-width="1.1"/><circle cx="1822.2" cy="1019" r="1.7" fill="#3f6fb4" stroke="#9fd4fa" stroke-width=".9"/><path d="M1832.6 1019l-2.4-1.6v3.2z" fill="#9fd4fa"/><rect x="1818.6" y="1026.2" width="9" height="5.4" fill="#f3b944"/>
<path d="M1830.6 1026l5 8.6h-10z" fill="#f6cf3a" stroke="#3b4453" stroke-width=".5"/><rect x="1830.1" y="1028.6" width="1" height="3" fill="#222"/><rect x="1830.1" y="1032.3" width="1" height="1" fill="#222"/>
<rect x="1843" y="1017.4" width="14.6" height="11.6" fill="#c9cdd3"/><path d="M1844 1025l3.4-5 3.6 5.6 3.4-6 3 4" fill="none" stroke="#7d848f" stroke-width="1"/><path d="M1853.6 1025.4l5 8.8h-10z" fill="#f39b86" stroke="#3b4453" stroke-width=".5"/><rect x="1853.1" y="1028.2" width="1" height="3" fill="#fff"/><rect x="1853.1" y="1032" width="1" height="1" fill="#fff"/>
<rect x="1872.2" y="1018.6" width="15.6" height="12" fill="none" stroke="#d6d9de" stroke-width="1.3"/><path d="M1880.8 1023.6l4-3M1884.8 1020.6h-2.6M1884.8 1020.6v2.4M1879 1025.6l-4 3M1875 1028.600h2.6M1875 1028.6v-2.4" stroke="#d6d9de" stroke-width="1" fill="none"/>
<rect x="1898.0" y="1018.1" width="16.2" height="1.9" fill="#e4e7ec" />
<rect x="1898.0" y="1023.9" width="16.2" height="1.9" fill="#e4e7ec" />
<rect x="1898.0" y="1029.7" width="16.2" height="1.9" fill="#e4e7ec" />
<path d="M15.9 1054.2l6.6-.9v6.3h-6.600zM23.400 1053.1l8.700-1.200v7.700h-8.700zM15.900 1060.500h6.600v6.300l-6.600-.9zM23.400 1060.500h8.700v7.700l-8.700-1.200z" fill="#ffffff"/>
<rect x="48.0" y="1040.4" width="288.0" height="38.6" fill="#f3f3f3" />
<rect x="48.0" y="1079.0" width="288.0" height="1.0" fill="#8a8a8a" />
<circle cx="70.6" cy="1058.2" r="5" fill="none" stroke="#2a2a2a" stroke-width="1.4"/><path d="M67 1062l-6.600 6.200" stroke="#2a2a2a" stroke-width="1.500"/>
<text x="88.5" y="1066.0" font-family="Liberation Sans, sans-serif" font-size="15" fill="#2f2f2f" font-weight="normal" font-style="normal" textLength="22.1" lengthAdjust="spacingAndGlyphs">Ara</text>
<path d="M288.1 1048.3 L290.4 1057.0 L299.1 1059.3 L290.4 1061.6 L288.1 1070.3 L285.8 1061.6 L277.1 1059.3 L285.8 1057.0z" fill="#f7c11e" stroke="#f7c11e" stroke-width="1.2" stroke-linejoin="round"/><path d="M310.7 1058.2 L311.8 1062.1 L315.7 1063.2 L311.8 1064.3 L310.7 1068.2 L309.6 1064.3 L305.7 1063.2 L309.6 1062.1z" fill="#f9cb3c" stroke="#f9cb3c" stroke-width="1.2" stroke-linejoin="round"/><path d="M268.4 1064.0 L269.2 1067.2 L272.4 1068.0 L269.2 1068.8 L268.4 1072.0 L267.6 1068.8 L264.4 1068.0 L267.6 1067.2z" fill="#2f9fd8" stroke="#2f9fd8" stroke-width="1.2" stroke-linejoin="round"/>
<circle cx="304.6" cy="1049.9" r="1.9" fill="#e0533d"/><circle cx="323.1" cy="1069.8" r="1.8" fill="#a9b765"/>
<circle cx="362.9" cy="1060.1" r="12" fill="#e34133"/><path d="M362.9 1060.100L352.500 1054.100A12 12 0 0 0 362.900 1072.100L368.900 1061.700z" fill="#2da94f"/><path d="M362.900 1072.100A12 12 0 0 0 373.300 1054.100H362.900z" fill="#fcc934"/><path d="M352.500 1054.100A12 12 0 0 1 373.300 1054.100H362.900z" fill="#e34133"/><circle cx="362.900" cy="1060.100" r="5.600" fill="#ffffff"/><circle cx="362.900" cy="1060.100" r="4.400" fill="#2f7de1"/>
<rect x="388.0" y="1040.0" width="44.5" height="40.0" fill="#3b3c3e" />
<path d="M401 1051.400L405 1047.700H422.300V1068L418.600 1072.200H401z" fill="#a90e3a"/><rect x="404.400" y="1047.700" width="17.900" height="20.400" fill="#e3174f"/><path d="M401 1051.400L404.400 1047.700V1068.100L401 1072.200z" fill="#f0466f"/><rect x="401" y="1066" width="21.300" height="6.200" fill="#8e0c31"/>
<text x="407.8" y="1063.6" font-family="Liberation Sans, sans-serif" font-size="15.5" fill="#ffffff" font-weight="bold" font-style="normal" textLength="11.2" lengthAdjust="spacingAndGlyphs">A</text>
<text x="406.0" y="1071.4" font-family="Liberation Sans, sans-serif" font-size="5" fill="#ffffff" font-weight="bold" font-style="normal" textLength="11.6" lengthAdjust="spacingAndGlyphs">CAD</text>
<path d="M448.200 1063c0-7 6-12.600 13.400-12.600 6.600 0 11 4 11 8.600 0 4.400-3.400 5-6 5-2.200 0-3 1.400-2.400 3.200.8 2.400-1 4.200-4.400 4.200-6.200 0-11.600-3.600-11.600-8.400z" fill="#bfe3f2" stroke="#6f8ea0" stroke-width=".8"/><circle cx="453.400" cy="1060" r="1.900" fill="#e8553f"/><circle cx="458.200" cy="1055.400" r="1.900" fill="#58b96a"/><circle cx="464.600" cy="1054.400" r="1.900" fill="#f2c13c"/><circle cx="455" cy="1066" r="1.900" fill="#3f6fd0"/><circle cx="460.800" cy="1062.400" r="2.200" fill="#2b2b33"/><path d="M471.400 1049.400l-8.400 20.400" stroke="#c98a4a" stroke-width="2"/><path d="M470.600 1049.600l2.200-3.600 1 .5-1.200 3.900z" fill="#e9d2b0"/>
<rect x="343.2" y="1078.2" width="39.0" height="1.8" fill="#76b9ed" />
<rect x="388.0" y="1078.2" width="44.5" height="1.8" fill="#76b9ed" />
<rect x="441.2" y="1078.2" width="39.4" height="1.8" fill="#76b9ed" />
<path d="M1758.200 1063.200l5.800-5.600 5.800 5.600" fill="none" stroke="#ffffff" stroke-width="1.200"/>
<path d="M1781.400 1057.800h2.800l3.800-3.400v11.600l-3.800-3.400h-2.800z" fill="none" stroke="#ffffff" stroke-width="1.100"/><path d="M1790.200 1057.400a3.600 3.600 0 0 1 0 5.600M1792.400 1055.400a6.400 6.400 0 0 1 0 9.600" fill="none" stroke="#ffffff" stroke-width="1"/><path d="M1794.800 1053.400a9.400 9.400 0 0 1 0 13.600" fill="none" stroke="#7a7a7a" stroke-width="1"/>
<text x="1819.6" y="1055.6" font-family="Liberation Sans, sans-serif" font-size="12" fill="#ffffff" font-weight="normal" font-style="normal" textLength="29.0" lengthAdjust="spacingAndGlyphs">23:30</text>
<text x="1807.6" y="1073.6" font-family="Liberation Sans, sans-serif" font-size="12" fill="#ffffff" font-weight="normal" font-style="normal" textLength="53.0" lengthAdjust="spacingAndGlyphs">14.04.2026</text>
<path d="M1879.400 1053h15.600v11.600h-5.600l-2.200 2.400-2.200-2.400h-5.600z" fill="none" stroke="#ffffff" stroke-width="1.100"/>
<rect x="1914.6" y="1040.0" width="0.9" height="40.0" fill="#5a5a5a" />
</svg>
</body></html>
